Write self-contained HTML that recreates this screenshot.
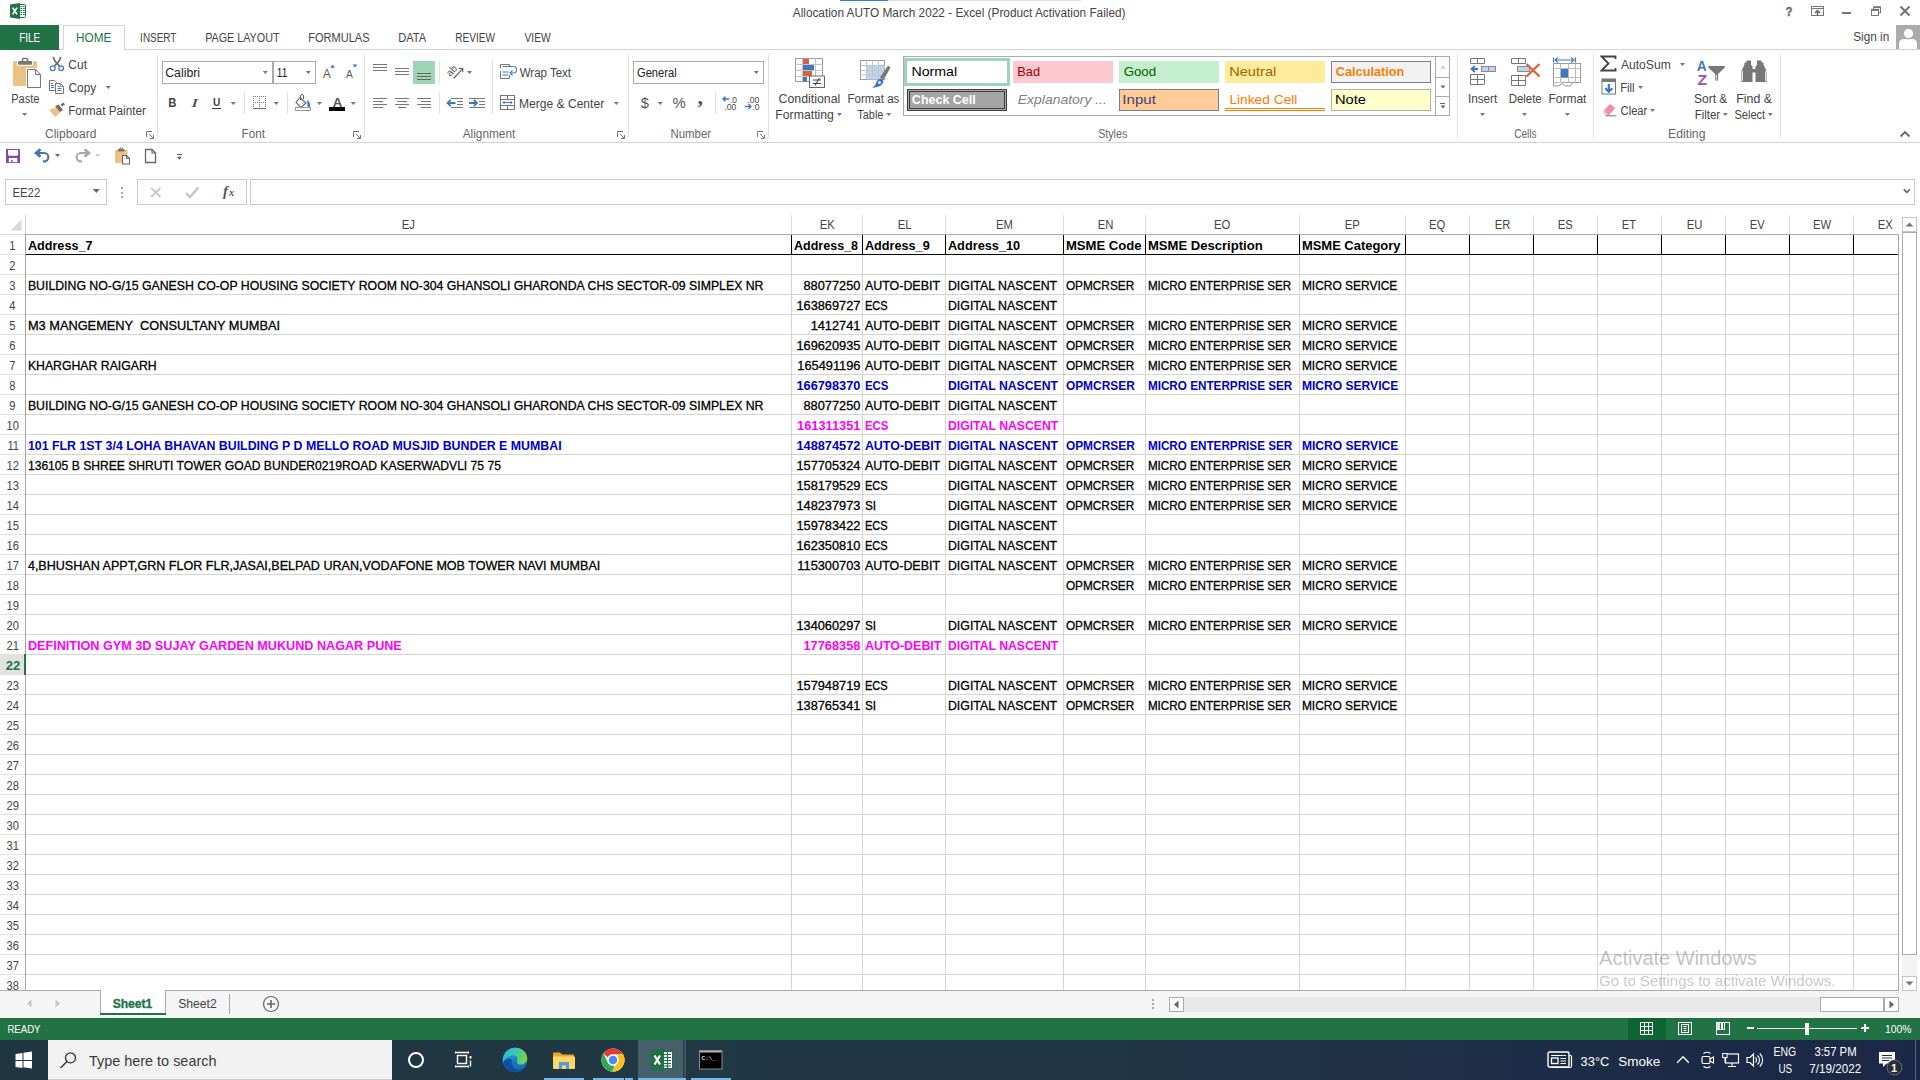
<!DOCTYPE html><html lang="en"><head><meta charset="utf-8"><title>Allocation AUTO March 2022 - Excel</title><style>
html,body{margin:0;padding:0}
body{width:1920px;height:1080px;overflow:hidden;background:#fff;position:relative;font-family:"Liberation Sans",sans-serif}
.a{position:absolute;display:block}
.t{position:absolute;white-space:pre;line-height:1;transform-origin:0 0;display:block}
</style></head><body><div class="a" style="left:840px;top:0px;width:48px;height:1px;background:#2a7de1;"></div>
<div class="a" style="left:888px;top:0px;width:193px;height:1px;background:#dddddd;"></div>
<svg class="a" style="left:9px;top:2px;" width="18" height="18" viewBox="0 0 18 18">
<rect x="9.5" y="2.5" width="7" height="13" rx="1" fill="#fff" stroke="#217346" stroke-width="1"/>
<path d="M11.5 4.5h1.7M14 4.5h1.7M11.5 6.5h1.7M14 6.5h1.7M11.5 8.500h1.7M14 8.500h1.7M11.500 10.500h1.700M14 10.500h1.700M11.500 12.500h1.700M14 12.500h1.700" stroke="#217346" stroke-width="1" fill="none"/>
<path d="M1 2.600L11 1v16L1 15.400z" fill="#217346"/>
<path d="M3.600 5.600l4.400 6.800M8 5.600L3.600 12.400" stroke="#fff" stroke-width="1.700" fill="none"/>
</svg>
<span class="t" style="left:792px;top:7px;font-size:12px;color:#444444;transform:translateX(0.75px) scaleX(0.9847);">Allocation AUTO March 2022 - Excel (Product Activation Failed)</span>
<span class="t" style="left:1785px;top:5px;font-size:13px;color:#6a6a6a;font-weight:bold;transform:translateX(0.57px) scaleX(0.8794);-webkit-text-stroke:0.4px;">?</span>
<svg class="a" style="left:1810px;top:5px;" width="15" height="12" viewBox="0 0 15 12"><rect x="1.5" y="1.5" width="12" height="9" fill="none" stroke="#777" stroke-width="1"/>
<path d="M1.5 3.5h12" stroke="#777"/><path d="M7.5 10v-4.5M5 8l2.5-2.5L10 8" stroke="#666" stroke-width="1.5" fill="none"/></svg>
<div class="a" style="left:1842px;top:12px;width:9px;height:2px;background:#777777;"></div>
<svg class="a" style="left:1870px;top:5px;" width="12" height="12" viewBox="0 0 12 12"><path d="M3.5 4v-2h7v6h-2" fill="none" stroke="#777" stroke-width="1"/><path d="M3 2.3h8" stroke="#777" stroke-width="1.8"/>
<rect x="1.5" y="4.5" width="7" height="6" fill="#fff" stroke="#777"/><path d="M1 5h8" stroke="#777" stroke-width="2"/></svg>
<svg class="a" style="left:1899px;top:5px;" width="12" height="12" viewBox="0 0 12 12"><path d="M1.5 1.5l9 9M10.5 1.5l-9 9" stroke="#777" stroke-width="2.2" fill="none"/></svg>
<div class="a" style="left:0px;top:49px;width:1920px;height:1px;background:#d4d4d4;"></div>
<div class="a" style="left:0px;top:25px;width:59px;height:25px;background:#217346;"></div>
<span class="t" style="left:19px;top:32px;font-size:12px;color:#fff;transform:translateX(0.19px) scaleX(0.8314);">FILE</span>
<div class="a" style="left:63px;top:25px;width:62px;height:25px;background:#fff;border:1px solid #d4d4d4;border-bottom:none;box-sizing:border-box;"></div>
<span class="t" style="left:76px;top:32px;font-size:12px;color:#217346;transform:translateX(0.08px) scaleX(0.9780);">HOME</span>
<span class="t" style="left:140px;top:32px;font-size:12px;color:#444444;transform:translateX(0.11px) scaleX(0.8300);">INSERT</span>
<span class="t" style="left:205px;top:32px;font-size:12px;color:#444444;transform:translateX(0.19px) scaleX(0.8959);">PAGE LAYOUT</span>
<span class="t" style="left:308px;top:32px;font-size:12px;color:#444444;transform:translateX(0.15px) scaleX(0.9202);">FORMULAS</span>
<span class="t" style="left:398px;top:32px;font-size:12px;color:#444444;transform:translateX(0.14px) scaleX(0.9280);">DATA</span>
<span class="t" style="left:455px;top:32px;font-size:12px;color:#444444;transform:translateX(0.16px) scaleX(0.8414);">REVIEW</span>
<span class="t" style="left:524px;top:32px;font-size:12px;color:#444444;transform:translateX(0.51px) scaleX(0.8562);">VIEW</span>
<span class="t" style="left:1853px;top:31px;font-size:12px;color:#444444;transform:translateX(0.15px) scaleX(0.9827);">Sign in</span>
<svg class="a" style="left:1896px;top:25px;" width="24" height="24" viewBox="0 0 24 24"><rect width="24" height="24" fill="#ababab"/>
<path d="M3 24v-5c0-3.2 2-5 5-5h8c3 0 5 1.8 5 5v5z" fill="#fff"/><circle cx="12.5" cy="8.5" r="5.3" fill="#fff" stroke="#ababab" stroke-width="1.4"/></svg>
<div class="a" style="left:0px;top:142px;width:1920px;height:1px;background:#d4d4d4;"></div>
<div class="a" style="left:157px;top:54px;width:1px;height:84px;background:#e1e1e1;"></div>
<div class="a" style="left:364px;top:54px;width:1px;height:84px;background:#e1e1e1;"></div>
<div class="a" style="left:628px;top:54px;width:1px;height:84px;background:#e1e1e1;"></div>
<div class="a" style="left:768px;top:54px;width:1px;height:84px;background:#e1e1e1;"></div>
<div class="a" style="left:1457px;top:54px;width:1px;height:84px;background:#e1e1e1;"></div>
<div class="a" style="left:1593px;top:54px;width:1px;height:84px;background:#e1e1e1;"></div>
<div class="a" style="left:1780px;top:54px;width:1px;height:84px;background:#e1e1e1;"></div>
<span class="t" style="left:45px;top:128px;font-size:12px;color:#666666;">Clipboard</span>
<span class="t" style="left:241px;top:128px;font-size:12px;color:#666666;transform:translateX(0.61px) scaleX(0.9749);">Font</span>
<span class="t" style="left:462px;top:128px;font-size:12px;color:#666666;transform:translateX(0.73px) scaleX(0.9838);">Alignment</span>
<span class="t" style="left:670px;top:128px;font-size:12px;color:#666666;transform:translateX(0.45px) scaleX(0.9525);">Number</span>
<span class="t" style="left:1098px;top:128px;font-size:12px;color:#666666;transform:translateX(0.18px) scaleX(0.8903);">Styles</span>
<span class="t" style="left:1514px;top:128px;font-size:12px;color:#666666;transform:translateX(0.21px) scaleX(0.8413);">Cells</span>
<span class="t" style="left:1668px;top:128px;font-size:12px;color:#666666;transform:translateX(0.11px) scaleX(1.0175);">Editing</span>
<svg class="a" style="left:146px;top:131px;" width="8" height="8" viewBox="0 0 8 8"><path d="M0.5 6V0.5H6" fill="none" stroke="#777"/><path d="M3 3l4 4M7.500 4v3.500H4" fill="none" stroke="#777"/></svg>
<svg class="a" style="left:353px;top:131px;" width="8" height="8" viewBox="0 0 8 8"><path d="M0.5 6V0.5H6" fill="none" stroke="#777"/><path d="M3 3l4 4M7.500 4v3.500H4" fill="none" stroke="#777"/></svg>
<svg class="a" style="left:617px;top:131px;" width="8" height="8" viewBox="0 0 8 8"><path d="M0.5 6V0.5H6" fill="none" stroke="#777"/><path d="M3 3l4 4M7.500 4v3.500H4" fill="none" stroke="#777"/></svg>
<svg class="a" style="left:757px;top:131px;" width="8" height="8" viewBox="0 0 8 8"><path d="M0.5 6V0.5H6" fill="none" stroke="#777"/><path d="M3 3l4 4M7.500 4v3.500H4" fill="none" stroke="#777"/></svg>
<svg class="a" style="left:1899px;top:130px;" width="12" height="8" viewBox="0 0 12 8"><path d="M1.5 6.500l4.500-4.500 4.500 4.500" fill="none" stroke="#666" stroke-width="1.800"/></svg>
<svg class="a" style="left:12px;top:57px;" width="30" height="32" viewBox="0 0 30 32"><rect x="1" y="4" width="24" height="25" rx="1.500" fill="#eac282"/>
<rect x="5" y="3" width="16" height="5.800" fill="#fff"/>
<rect x="6" y="4" width="14" height="3.700" rx="0.800" fill="#777"/><path d="M10.500 4.500v-2a1 1 0 0 1 1-1h3a1 1 0 0 1 1 1v2" fill="none" stroke="#777" stroke-width="1.600"/>
<path d="M14 11h11l5 5v15H14z" fill="#fff"/>
<path d="M15.500 12.500h8l5 5v13h-13z" fill="#fff" stroke="#777" stroke-width="1"/><path d="M23.500 12.500v5h5" fill="none" stroke="#777"/></svg>
<span class="t" style="left:11px;top:93px;font-size:12px;color:#444444;transform:translateX(0.16px) scaleX(0.9200);">Paste</span>
<svg class="a" style="left:21px;top:112px;" width="7" height="5" viewBox="0 0 7 5"><path d="M1.0 1.0h5l-2.5 3z" fill="#777"/></svg>
<svg class="a" style="left:49px;top:56px;" width="16" height="16" viewBox="0 0 16 16"><path d="M4.300 0.800c.5 3 2 5.500 6.200 9M11.700 0.800c-.5 3-2 5.500-6.200 9" stroke="#666" stroke-width="1.700" fill="none"/>
<circle cx="3.800" cy="12.300" r="2.400" fill="none" stroke="#3a78c3" stroke-width="1.200"/><circle cx="12.200" cy="12.300" r="2.400" fill="none" stroke="#3a78c3" stroke-width="1.200"/></svg>
<span class="t" style="left:68px;top:59px;font-size:12px;color:#444444;transform:translateX(0.36px) scaleX(0.9959);">Cut</span>
<svg class="a" style="left:48px;top:79px;" width="17" height="16" viewBox="0 0 17 16"><path d="M1.500 1.500h5l2 2v8h-7z" fill="#fff" stroke="#777"/><path d="M3 4.500h2M3 6.500h3M3 8.500h3" stroke="#3a78c3"/>
<path d="M7.500 4.500h5l3 3v7h-8z" fill="#fff" stroke="#777"/><path d="M12.500 4.500v3h3" fill="none" stroke="#777" stroke-width="0.800"/><path d="M9.500 7.500h2M9.500 9.500h4M9.500 11.500h4" stroke="#3a78c3"/></svg>
<span class="t" style="left:68px;top:82px;font-size:12px;color:#444444;transform:translateX(0.46px) scaleX(0.9930);">Copy</span>
<svg class="a" style="left:105px;top:85px;" width="7" height="5" viewBox="0 0 7 5"><path d="M0.7999999999999972 1.0h5l-2.5 3z" fill="#777"/></svg>
<svg class="a" style="left:48px;top:102px;" width="18" height="16" viewBox="0 0 18 16"><path d="M1 7.500l8.500-2.500 3 5.500-5.500 4.500z" fill="#eac282"/><path d="M7 4l3.500-1.500 4.500 5.500-3 2z" fill="#6e6e6e"/><path d="M12.500 2.500l3-2 1.500 2-3 2z" fill="#6e6e6e"/></svg>
<span class="t" style="left:68px;top:105px;font-size:12px;color:#444444;transform:translateX(0.19px) scaleX(0.9792);">Format Painter</span>
<div class="a" style="left:162px;top:61px;width:111px;height:23px;background:#fff;border:1px solid #ababab;box-sizing:border-box;"></div>
<div class="a" style="left:273px;top:61px;width:43px;height:23px;background:#fff;border:1px solid #ababab;box-sizing:border-box;"></div>
<span class="t" style="left:165px;top:67px;font-size:12.5px;color:#222;transform:translateX(0.24px) scaleX(0.9822);">Calibri</span>
<span class="t" style="left:276px;top:67px;font-size:12.5px;color:#222;transform:translateX(0.79px) scaleX(0.8032);">11</span>
<svg class="a" style="left:262px;top:70px;" width="7" height="5" viewBox="0 0 7 5"><path d="M0.8000000000000114 1.0h5l-2.5 3z" fill="#777"/></svg>
<svg class="a" style="left:305px;top:70px;" width="7" height="5" viewBox="0 0 7 5"><path d="M0.8000000000000114 1.0h5l-2.5 3z" fill="#777"/></svg>
<span class="t" style="left:323px;top:67px;font-size:13px;color:#555;transform:translateX(0.03px) scaleX(0.8911);">A</span>
<svg class="a" style="left:330px;top:64px;" width="6" height="4" viewBox="0 0 6 4"><path d="M0 3.800l2.500-3 2.500 3z" fill="#3a78c3"/></svg>
<span class="t" style="left:346px;top:69px;font-size:10.5px;color:#555;transform:translateX(0.07px) scaleX(0.9723);">A</span>
<svg class="a" style="left:352px;top:64px;" width="6" height="4" viewBox="0 0 6 4"><path d="M0.500 0.500h5l-2.500 3z" fill="#3a78c3"/></svg>
<span class="t" style="left:168px;top:97px;font-size:12.5px;color:#444;font-weight:bold;transform:translateX(0.28px) scaleX(0.9023);">B</span>
<span class="t" style="left:191px;top:96px;font-size:13px;color:#444;font-style:italic;font-family:'Liberation Serif', serif;transform:translateX(0.09px) scaleX(1.6523);">I</span>
<span class="t" style="left:213px;top:97px;font-size:10.5px;color:#444;font-weight:bold;transform:translateX(0.06px) scaleX(0.9642);">U</span>
<div class="a" style="left:212px;top:108px;width:9px;height:1px;background:#444;"></div>
<svg class="a" style="left:230px;top:101px;" width="7" height="5" viewBox="0 0 7 5"><path d="M0.8000000000000114 1.0h5l-2.5 3z" fill="#777"/></svg>
<div class="a" style="left:244px;top:92px;width:1px;height:22px;background:#e1e1e1;"></div>
<svg class="a" style="left:253px;top:96px;" width="14" height="14" viewBox="0 0 14 14"><path d="M0 0.500h13M0 6.500h13M0.500 0v12M6.500 0v12M12.500 0v12" stroke="#777" stroke-dasharray="1 1" fill="none" shape-rendering="crispEdges"/><path d="M0 12.500h13" stroke="#666" stroke-width="1" shape-rendering="crispEdges"/></svg>
<svg class="a" style="left:273px;top:101px;" width="7" height="5" viewBox="0 0 7 5"><path d="M0.8000000000000114 1.0h5l-2.5 3z" fill="#777"/></svg>
<div class="a" style="left:287px;top:92px;width:1px;height:22px;background:#e1e1e1;"></div>
<svg class="a" style="left:294px;top:94px;" width="18" height="18" viewBox="0 0 18 18"><path d="M6 3.500l6 5.500-5 4.500-5-5z" fill="#fff" stroke="#666" stroke-width="1.100"/><path d="M6.500 6V2a1.500 1.500 0 0 1 3 0v3" fill="none" stroke="#666"/>
<path d="M13.200 6c2 1.500 3.800 4 2.800 6.500-1 1.200-3 .5-2.600-1.500z" fill="#3a78c3"/><rect x="1.500" y="13.500" width="15" height="3" fill="#fff" stroke="#999"/></svg>
<svg class="a" style="left:316px;top:101px;" width="7" height="5" viewBox="0 0 7 5"><path d="M1.0 1.0h5l-2.5 3z" fill="#777"/></svg>
<span class="t" style="left:332px;top:97px;font-size:12.5px;color:#555;font-weight:bold;transform:translateX(0.70px) scaleX(1.0600);">A</span>
<div class="a" style="left:329px;top:107px;width:16px;height:4px;background:#000;"></div>
<svg class="a" style="left:350px;top:101px;" width="7" height="5" viewBox="0 0 7 5"><path d="M0.8000000000000114 1.0h5l-2.5 3z" fill="#777"/></svg>
<div class="a" style="left:373px;top:64px;width:14px;height:1px;background:#777;"></div>
<div class="a" style="left:373px;top:67px;width:14px;height:1px;background:#777;"></div>
<div class="a" style="left:373px;top:70px;width:14px;height:1px;background:#777;"></div>
<div class="a" style="left:395px;top:68px;width:14px;height:1px;background:#777;"></div>
<div class="a" style="left:395px;top:71px;width:14px;height:1px;background:#777;"></div>
<div class="a" style="left:395px;top:74px;width:14px;height:1px;background:#777;"></div>
<div class="a" style="left:413px;top:61px;width:22px;height:23px;background:#9fd5b7;"></div>
<div class="a" style="left:417px;top:73px;width:14px;height:1px;background:#666;"></div>
<div class="a" style="left:417px;top:76px;width:14px;height:1px;background:#666;"></div>
<div class="a" style="left:417px;top:79px;width:14px;height:1px;background:#666;"></div>
<div class="a" style="left:439px;top:61px;width:1px;height:22px;background:#e1e1e1;"></div>
<svg class="a" style="left:445px;top:62px;" width="20" height="19" viewBox="0 0 20 19"><path d="M8.500 16.500L17.500 6.800" stroke="#666" stroke-width="1.200"/><path d="M14 6.300l3.800 0.200-0.200 3.800" fill="none" stroke="#666" stroke-width="1.200"/>
<g transform="rotate(-47 7.500 9)"><text x="1.500" y="11.500" font-family="Liberation Sans,sans-serif" font-size="10" fill="#555">ab</text></g></svg>
<svg class="a" style="left:466px;top:70px;" width="7" height="5" viewBox="0 0 7 5"><path d="M1.0 1.0h5l-2.5 3z" fill="#777"/></svg>
<div class="a" style="left:492px;top:60px;width:1px;height:54px;background:#e1e1e1;"></div>
<div class="a" style="left:439px;top:92px;width:1px;height:22px;background:#e1e1e1;"></div>
<svg class="a" style="left:500px;top:63px;" width="17" height="17" viewBox="0 0 17 17"><path d="M0.500 5.500v-4h9v2" fill="none" stroke="#777"/><path d="M0.500 8v7.500h9V12" fill="none" stroke="#777"/>
<path d="M2.500 3.500h11" stroke="#3a78c3"/><path d="M2.500 9h6M2.500 12h6" stroke="#3a78c3" stroke-width="1.100"/>
<path d="M13.500 3.500a3 3 0 0 1 0 6.500H10.500" fill="none" stroke="#3a78c3" stroke-width="1.100"/><path d="M12.500 7.500l-2.500 2.500 2.500 2.500" fill="none" stroke="#3a78c3" stroke-width="1.100"/></svg>
<span class="t" style="left:519px;top:67px;font-size:12px;color:#444444;transform:translateX(0.65px) scaleX(0.9597);">Wrap Text</span>
<div class="a" style="left:373px;top:98px;width:14px;height:1px;background:#777;"></div>
<div class="a" style="left:373px;top:101px;width:10px;height:1px;background:#777;"></div>
<div class="a" style="left:373px;top:104px;width:14px;height:1px;background:#777;"></div>
<div class="a" style="left:373px;top:107px;width:10px;height:1px;background:#777;"></div>
<div class="a" style="left:395.0px;top:98px;width:14px;height:1px;background:#777;"></div>
<div class="a" style="left:397.0px;top:101px;width:10px;height:1px;background:#777;"></div>
<div class="a" style="left:395.0px;top:104px;width:14px;height:1px;background:#777;"></div>
<div class="a" style="left:398.0px;top:107px;width:8px;height:1px;background:#777;"></div>
<div class="a" style="left:417px;top:98px;width:14px;height:1px;background:#777;"></div>
<div class="a" style="left:421px;top:101px;width:10px;height:1px;background:#777;"></div>
<div class="a" style="left:417px;top:104px;width:14px;height:1px;background:#777;"></div>
<div class="a" style="left:421px;top:107px;width:10px;height:1px;background:#777;"></div>
<svg class="a" style="left:446px;top:97px;" width="18" height="12" viewBox="0 0 18 12"><path d="M5 1.500h12M11 4.500h6M11 7.500h6M5 10.500h12" stroke="#777"/><path d="M1.500 6h8M4.800 2.800L1.500 6l3.300 3.200" fill="none" stroke="#3a78c3" stroke-width="1.800"/></svg>
<svg class="a" style="left:468px;top:97px;" width="18" height="12" viewBox="0 0 18 12"><path d="M1 1.500h16M11 4.500h6M11 7.500h6M1 10.500h16" stroke="#777"/><path d="M1 6h8M5.800 2.800L9 6l-3.200 3.200" fill="none" stroke="#3a78c3" stroke-width="1.800"/></svg>
<svg class="a" style="left:499px;top:94px;" width="17" height="17" viewBox="0 0 17 17"><rect x="1.500" y="1.500" width="14" height="14" fill="#fff" stroke="#777"/><path d="M1.500 5.500h14M1.500 11.500h14M8.500 1.500v4M8.500 11.500v4" stroke="#777"/>
<path d="M4 8.500h9M5.500 7L4 8.500 5.500 10M11.500 7L13 8.500 11.500 10" fill="none" stroke="#3a78c3"/></svg>
<span class="t" style="left:518px;top:98px;font-size:12px;color:#444444;transform:translateX(0.99px) scaleX(1.0055);">Merge &amp; Center</span>
<svg class="a" style="left:613px;top:101px;" width="7" height="5" viewBox="0 0 7 5"><path d="M0.7999999999999545 1.0h5l-2.5 3z" fill="#777"/></svg>
<div class="a" style="left:633px;top:61px;width:131px;height:23px;background:#fff;border:1px solid #ababab;box-sizing:border-box;"></div>
<span class="t" style="left:636px;top:67px;font-size:12.5px;color:#222;transform:translateX(0.97px) scaleX(0.8925);">General</span>
<svg class="a" style="left:753px;top:70px;" width="7" height="5" viewBox="0 0 7 5"><path d="M0.7999999999999545 1.0h5l-2.5 3z" fill="#777"/></svg>
<span class="t" style="left:640px;top:95px;font-size:15px;color:#555;transform:translateX(0.81px) scaleX(0.9845);">$</span>
<svg class="a" style="left:657px;top:101px;" width="7" height="5" viewBox="0 0 7 5"><path d="M0.7999999999999545 1.0h5l-2.5 3z" fill="#777"/></svg>
<span class="t" style="left:672px;top:96px;font-size:14.5px;color:#555;transform:translateX(0.38px) scaleX(1.0287);">%</span>
<span class="t" style="left:697px;top:87px;font-size:21px;color:#555;font-weight:bold;font-family:'Liberation Serif', serif;transform:translateX(0.40px) scaleX(1.0422);">,</span>
<div class="a" style="left:715px;top:92px;width:1px;height:22px;background:#e1e1e1;"></div>
<svg class="a" style="left:722px;top:95px;" width="17" height="16" viewBox="0 0 17 16"><path d="M1 4h6M3.500 1.500L1 4l2.500 2.500" fill="none" stroke="#3a78c3" stroke-width="1.300"/>
<text x="8" y="7.500" font-family="Liberation Sans,sans-serif" font-size="8.500" fill="#444">.0</text><text x="2.500" y="14.500" font-family="Liberation Sans,sans-serif" font-size="8.500" fill="#444">.00</text></svg>
<svg class="a" style="left:744px;top:95px;" width="17" height="16" viewBox="0 0 17 16"><text x="3.500" y="7.500" font-family="Liberation Sans,sans-serif" font-size="8.500" fill="#444">.00</text>
<path d="M1 11.500h6M4.500 9L7 11.500 4.500 14" fill="none" stroke="#3a78c3" stroke-width="1.300"/><text x="8.500" y="14.500" font-family="Liberation Sans,sans-serif" font-size="8.500" fill="#444">.0</text></svg>
<svg class="a" style="left:795px;top:57px;" width="31" height="32" viewBox="0 0 31 32"><rect x="0.500" y="1.500" width="27" height="23" fill="#fff" stroke="#9a9a9a"/>
<path d="M0.500 7.500h27M0.500 13.500h27M0.500 19.500h27M7.500 1.500v23M20.500 1.500v23" stroke="#c4c4c4"/>
<rect x="8" y="2" width="6" height="5" fill="#d9623b"/><rect x="8" y="8" width="11" height="5" fill="#3a78c3"/><rect x="8" y="14" width="9" height="5" fill="#d9623b"/><rect x="8" y="20" width="4" height="4.500" fill="#3a78c3"/>
<rect x="14.500" y="19" width="15" height="11.500" fill="#fff" stroke="#666"/>
<path d="M18 23h8M18 26.500h8M24.500 21l-4.500 7.500" stroke="#444" stroke-width="1.100"/></svg>
<span class="t" style="left:778px;top:93px;font-size:12px;color:#444444;transform:translateX(0.44px) scaleX(1.0315);">Conditional</span>
<span class="t" style="left:775px;top:109px;font-size:12px;color:#444444;transform:translateX(0.31px) scaleX(1.0220);">Formatting</span>
<svg class="a" style="left:836px;top:112px;" width="7" height="5" viewBox="0 0 7 5"><path d="M1.0 1.0h5l-2.5 3z" fill="#777"/></svg>
<svg class="a" style="left:860px;top:59px;" width="31" height="30" viewBox="0 0 31 30"><rect x="0.500" y="1.500" width="24" height="19" fill="#fff" stroke="#9a9a9a"/>
<rect x="6.500" y="6.500" width="18" height="14" fill="#bdd3ee"/>
<path d="M0.500 6.500h24M0.500 11.500h24M0.500 16h24M6.500 1.500v19M12.500 1.500v19M18.500 1.500v19" stroke="#c4c4c4"/>
<path d="M20 18.500L28 6.500l2.500 2-7 12.500z" fill="#777"/><path d="M12 28.500c3-1.500 4-4 5-6.500 1.500-2.500 4-3 5.500-1.500 1.500 1.500 1 4-1 5.500-2.500 2-6 2.500-9.500 2.500z" fill="#3a78c3"/><circle cx="19.500" cy="23.500" r="1.500" fill="#dce8f6"/></svg>
<span class="t" style="left:847px;top:93px;font-size:12px;color:#444444;transform:translateX(0.44px) scaleX(0.9607);">Format as</span>
<span class="t" style="left:857px;top:109px;font-size:12px;color:#444444;transform:translateX(0.35px) scaleX(0.9080);">Table</span>
<svg class="a" style="left:885px;top:112px;" width="7" height="5" viewBox="0 0 7 5"><path d="M1.2000000000000455 1.0h5l-2.5 3z" fill="#777"/></svg>
<div class="a" style="left:903px;top:56px;width:547px;height:60px;background:#fff;border:1px solid #ababab;box-sizing:border-box;"></div>
<div class="a" style="left:904px;top:58px;width:106px;height:28px;background:#fff;border:3px solid #9fd5b7;box-sizing:border-box;"></div>
<span class="t" style="left:911px;top:65px;font-size:13.2px;color:#000;transform:translateX(0.40px) scaleX(1.0760);">Normal</span>
<div class="a" style="left:1013px;top:61px;width:100px;height:22px;background:#ffc7ce;"></div>
<span class="t" style="left:1017px;top:65px;font-size:13.2px;color:#9c0006;transform:translateX(0.36px) scaleX(0.9672);">Bad</span>
<div class="a" style="left:1119px;top:61px;width:100px;height:22px;background:#c6efce;"></div>
<span class="t" style="left:1123px;top:65px;font-size:13.2px;color:#006100;transform:translateX(0.63px) scaleX(1.0071);">Good</span>
<div class="a" style="left:1225px;top:61px;width:100px;height:22px;background:#ffeb9c;"></div>
<span class="t" style="left:1229px;top:65px;font-size:13.2px;color:#9c6500;transform:translateX(0.20px) scaleX(1.1064);">Neutral</span>
<div class="a" style="left:1331px;top:61px;width:100px;height:22px;background:#f2f2f2;border:1px solid #7f7f7f;box-sizing:border-box;"></div>
<span class="t" style="left:1335px;top:65px;font-size:13.2px;color:#fa7d00;font-weight:bold;transform:translateX(0.76px) scaleX(0.9651);">Calculation</span>
<div class="a" style="left:907px;top:89px;width:100px;height:22px;background:#a5a5a5;border:3px double #3f3f3f;box-sizing:border-box;"></div>
<span class="t" style="left:911px;top:93px;font-size:13.2px;color:#fff;font-weight:bold;transform:translateX(0.87px) scaleX(0.9460);">Check Cell</span>
<span class="t" style="left:1017px;top:93px;font-size:13.2px;color:#7f7f7f;font-style:italic;transform:translateX(0.82px) scaleX(1.0557);">Explanatory ...</span>
<div class="a" style="left:1119px;top:89px;width:100px;height:22px;background:#ffcc99;border:1px solid #7f7f7f;box-sizing:border-box;"></div>
<span class="t" style="left:1122px;top:93px;font-size:13.2px;color:#3f3f76;transform:translateX(0.37px) scaleX(1.1428);">Input</span>
<span class="t" style="left:1229px;top:93px;font-size:13.2px;color:#fa7d00;transform:translateX(0.38px) scaleX(1.0426);">Linked Cell</span>
<div class="a" style="left:1225px;top:108px;width:100px;height:3px;border-top:1px solid #ff8001;border-bottom:1px solid #ff8001;box-sizing:border-box;"></div>
<div class="a" style="left:1331px;top:89px;width:100px;height:22px;background:#ffffcc;border:1px solid #b2b2b2;box-sizing:border-box;"></div>
<span class="t" style="left:1334px;top:93px;font-size:13.2px;color:#000;transform:translateX(1.00px) scaleX(1.1145);">Note</span>
<div class="a" style="left:1435px;top:57px;width:1px;height:58px;background:#ababab;"></div>
<div class="a" style="left:1436px;top:77px;width:13px;height:1px;background:#ababab;"></div>
<div class="a" style="left:1436px;top:96px;width:13px;height:1px;background:#ababab;"></div>
<div class="a" style="left:1436px;top:57px;width:13px;height:20px;background:#fafafa;"></div>
<svg class="a" style="left:1440px;top:65px;" width="6" height="4" viewBox="0 0 6 4"><path d="M0.500 3.500l2.500-3 2.500 3z" fill="#c8c8c8"/></svg>
<svg class="a" style="left:1440px;top:85px;" width="6" height="4" viewBox="0 0 6 4"><path d="M0.500 0.500h5l-2.500 3z" fill="#666"/></svg>
<div class="a" style="left:1440px;top:103px;width:5px;height:1px;background:#666;"></div>
<svg class="a" style="left:1440px;top:105px;" width="6" height="4" viewBox="0 0 6 4"><path d="M0.500 0.500h5l-2.500 3z" fill="#666"/></svg>
<svg class="a" style="left:1469px;top:57px;" width="28" height="30" viewBox="0 0 28 30"><path d="M1.500 1.500h14v5h-14zM8.500 1.500v5" fill="#fff" stroke="#777"/>
<rect x="12.500" y="9.500" width="14" height="5" fill="#bdd3ee" stroke="#8a8a8a"/><path d="M19.500 9.500v5" stroke="#8a8a8a"/>
<path d="M2.500 12h6.500M5.800 8.800L2.500 12l3.300 3.200" fill="none" stroke="#3a78c3" stroke-width="1.800"/>
<path d="M1.500 17.500h14v10h-14zM1.500 22.500h14M8.500 17.500v10" fill="#fff" stroke="#777"/></svg>
<span class="t" style="left:1467px;top:93px;font-size:12px;color:#444444;transform:translateX(0.90px) scaleX(0.9755);">Insert</span>
<svg class="a" style="left:1479px;top:112px;" width="7" height="5" viewBox="0 0 7 5"><path d="M1.0 1.0h5l-2.5 3z" fill="#777"/></svg>
<svg class="a" style="left:1510px;top:57px;" width="32" height="30" viewBox="0 0 32 30"><path d="M1.500 1.500h14v5h-14zM8.500 1.500v5" fill="#fff" stroke="#777"/>
<rect x="7.500" y="9.500" width="12" height="5" fill="#bdd3ee" stroke="#8a8a8a"/>
<path d="M1.500 18.500h14v10h-14zM1.500 23.500h14M8.500 18.500v10" fill="#fff" stroke="#777"/>
<path d="M16.500 7l13 12.500M29.500 7L16.500 19.500" stroke="#d9623b" stroke-width="2.300" fill="none"/></svg>
<span class="t" style="left:1508px;top:93px;font-size:12px;color:#444444;transform:translateX(0.63px) scaleX(0.9530);">Delete</span>
<svg class="a" style="left:1521px;top:112px;" width="7" height="5" viewBox="0 0 7 5"><path d="M1.0 1.0h5l-2.5 3z" fill="#777"/></svg>
<svg class="a" style="left:1552px;top:55px;" width="30" height="34" viewBox="0 0 30 34"><path d="M1.500 2.500v5M23.500 2.500v5M3 5h19M6 2.500L3 5l3 2.500M19 2.500L22 5l-3 2.500" fill="none" stroke="#3a78c3" stroke-width="1.100"/>
<rect x="1.500" y="8.500" width="27" height="19" fill="#fff" stroke="#999"/><path d="M1.500 13.500h27M1.500 22.500h27M8.500 8.500v19M16.500 8.500v19M23.500 8.500v19" stroke="#bbb"/>
<rect x="9" y="14" width="7" height="8.500" fill="#3a78c3"/>
<path d="M1.500 27.500v3.500h5.500l2-2h2.500l1.500 2h5.500l2-3" fill="#fff" stroke="#999"/></svg>
<span class="t" style="left:1548px;top:93px;font-size:12px;color:#444444;transform:translateX(0.58px) scaleX(0.9947);">Format</span>
<svg class="a" style="left:1564px;top:112px;" width="7" height="5" viewBox="0 0 7 5"><path d="M1.0 1.0h5l-2.5 3z" fill="#777"/></svg>
<svg class="a" style="left:1600px;top:55px;" width="18" height="17" viewBox="0 0 18 17"><path d="M15.500 4V1.500H1.500l7 7-7 7h14V13" fill="none" stroke="#444" stroke-width="1.800"/></svg>
<span class="t" style="left:1620px;top:59px;font-size:12px;color:#444444;transform:translateX(0.95px) scaleX(1.0084);">AutoSum</span>
<svg class="a" style="left:1679px;top:62px;" width="7" height="5" viewBox="0 0 7 5"><path d="M1.0 1.0h5l-2.5 3z" fill="#777"/></svg>
<svg class="a" style="left:1601px;top:78px;" width="16" height="18" viewBox="0 0 16 18"><rect x="1" y="1" width="13.500" height="15" fill="#fff" stroke="#777"/><rect x="1" y="1" width="13.500" height="3" fill="#777"/>
<path d="M7.800 6v7.500M4.200 10.200l3.600 3.600 3.600-3.600" fill="none" stroke="#3a78c3" stroke-width="2.200"/></svg>
<span class="t" style="left:1620px;top:82px;font-size:12px;color:#444444;transform:translateX(0.27px) scaleX(0.9336);">Fill</span>
<svg class="a" style="left:1637px;top:85px;" width="7" height="5" viewBox="0 0 7 5"><path d="M1.0 1.0h5l-2.5 3z" fill="#777"/></svg>
<svg class="a" style="left:1601px;top:102px;" width="17" height="15" viewBox="0 0 17 15"><path d="M2 9.500l7-7.500 5.500 4-7 7.500H4.500z" fill="#ee8fa3"/><path d="M2 9.500L4.500 13.500h3l-3.500-5z" fill="#f6c3cd"/><path d="M5 13.800h10.500" stroke="#777"/></svg>
<span class="t" style="left:1620px;top:105px;font-size:12px;color:#444444;transform:translateX(0.58px) scaleX(0.9308);">Clear</span>
<svg class="a" style="left:1649px;top:108px;" width="7" height="5" viewBox="0 0 7 5"><path d="M1.0 1.0h5l-2.5 3z" fill="#777"/></svg>
<span class="t" style="left:1696px;top:58px;font-size:15.5px;color:#3a78c3;font-weight:bold;transform:translateX(0.68px) scaleX(0.8903);">A</span>
<span class="t" style="left:1697px;top:72px;font-size:15.5px;color:#9a4fb5;font-weight:bold;transform:translateX(0.42px) scaleX(1.0213);">Z</span>
<svg class="a" style="left:1707px;top:65px;" width="19" height="17" viewBox="0 0 19 17"><path d="M1.200 1h16.600v1.500l-6.800 6.500v6.500h-2.800V9L1.200 2.500z" fill="#777"/><path d="M9.300 10v4.800" stroke="#fff" stroke-width="0.800"/></svg>
<span class="t" style="left:1694px;top:93px;font-size:12px;color:#444444;">Sort &amp;</span>
<span class="t" style="left:1694px;top:109px;font-size:12px;color:#444444;transform:translateX(0.65px) scaleX(0.9546);">Filter</span>
<svg class="a" style="left:1722px;top:112px;" width="7" height="5" viewBox="0 0 7 5"><path d="M0.7999999999999545 1.0h5l-2.5 3z" fill="#777"/></svg>
<svg class="a" style="left:1740px;top:59px;" width="28" height="25" viewBox="0 0 28 25"><path d="M6.500 1.500h4.500v4l1.500 2.500V23H1.500V12l3-6.500V3.500h2zM21.500 1.500H17v4l-1.500 2.500V23h11V12l-3-6.500V3.500h-2z" fill="#777"/>
<rect x="11.500" y="10" width="5" height="3.500" fill="#777"/><path d="M2.500 12v10M25.500 12v10" stroke="#fff" stroke-width="0.800"/></svg>
<span class="t" style="left:1736px;top:93px;font-size:12px;color:#444444;transform:translateX(0.28px) scaleX(1.0326);">Find &amp;</span>
<span class="t" style="left:1734px;top:109px;font-size:12px;color:#444444;transform:translateX(0.40px) scaleX(0.9221);">Select</span>
<svg class="a" style="left:1767px;top:112px;" width="7" height="5" viewBox="0 0 7 5"><path d="M0.7999999999999545 1.0h5l-2.5 3z" fill="#777"/></svg>
<svg class="a" style="left:6px;top:149px;" width="15" height="15" viewBox="0 0 15 15"><rect x="0" y="0" width="14" height="14" rx="0.500" fill="#8347a6"/>
<path d="M2 1h10.200v4.300a1.500 1.500 0 0 1-1.500 1.500H3.500A1.500 1.500 0 0 1 2 5.300z" fill="#fff"/>
<rect x="2.800" y="9" width="8.500" height="4.200" fill="#fff"/><rect x="5.200" y="11.200" width="1.600" height="2" fill="#8347a6"/></svg>
<svg class="a" style="left:34px;top:148px;" width="17" height="16" viewBox="0 0 17 16"><path d="M3 5h7.200a4.200 4.200 0 0 1 0 8.400H9" fill="none" stroke="#3b78b3" stroke-width="2.100"/>
<path d="M6.500 1.300L2 5l4.500 3.700" fill="none" stroke="#3b78b3" stroke-width="2.600"/></svg>
<svg class="a" style="left:54px;top:153px;" width="7" height="5" viewBox="0 0 7 5"><path d="M1.0 1.0h5l-2.5 3z" fill="#666"/></svg>
<svg class="a" style="left:74px;top:148px;" width="17" height="16" viewBox="0 0 17 16"><path d="M14 5H6.800a4.200 4.200 0 0 0 0 8.400H8" fill="none" stroke="#a9a9a9" stroke-width="2.100"/>
<path d="M10.500 1.300L15 5l-4.500 3.700" fill="none" stroke="#a9a9a9" stroke-width="2.600"/></svg>
<svg class="a" style="left:94px;top:153px;" width="7" height="5" viewBox="0 0 7 5"><path d="M1.0 1.0h5l-2.5 3z" fill="#c8c8c8"/></svg>
<svg class="a" style="left:114px;top:147px;" width="17" height="18" viewBox="0 0 17 18"><rect x="1" y="3" width="12.500" height="13" rx="0.800" fill="#eac282"/>
<rect x="4" y="2" width="6.500" height="2.500" fill="#777"/><path d="M6 2.500v-1.500h2.500v1.500" fill="none" stroke="#777" stroke-width="1"/>
<path d="M8.500 8.500h4l3 3v5.500h-7z" fill="#fff" stroke="#666" stroke-width="1.100"/><path d="M12.500 8.500v3h3" fill="none" stroke="#666" stroke-width="1"/></svg>
<svg class="a" style="left:144px;top:148px;" width="13" height="16" viewBox="0 0 13 16"><path d="M1.500 1.500h6.500l3.500 3.500v9.500h-10z" fill="#fff" stroke="#666" stroke-width="1.300"/><path d="M8 1.500v3.500h3.500" fill="none" stroke="#666" stroke-width="1.100"/></svg>
<div class="a" style="left:177px;top:154px;width:5px;height:1px;background:#666;"></div>
<svg class="a" style="left:176px;top:156px;" width="7" height="5" viewBox="0 0 7 5"><path d="M1.0 0.8000000000000114h5l-2.5 3z" fill="#666"/></svg>
<div class="a" style="left:5px;top:179px;width:102px;height:26px;background:#fff;border:1px solid #c6c6c6;box-sizing:border-box;"></div>
<span class="t" style="left:12px;top:187px;font-size:12.5px;color:#444444;transform:translateX(0.43px) scaleX(0.9100);">EE22</span>
<svg class="a" style="left:92px;top:188px;" width="9" height="6" viewBox="0 0 9 6"><path d="M0.7999999999999972 1.0h7l-3.5 4z" fill="#666"/></svg>
<div class="a" style="left:121px;top:187px;width:2px;height:2px;background:#a6a6a6;"></div>
<div class="a" style="left:121px;top:192px;width:2px;height:2px;background:#a6a6a6;"></div>
<div class="a" style="left:121px;top:196px;width:2px;height:2px;background:#a6a6a6;"></div>
<div class="a" style="left:137px;top:179px;width:110px;height:26px;background:#fff;border:1px solid #c6c6c6;box-sizing:border-box;"></div>
<svg class="a" style="left:149px;top:186px;" width="14" height="14" viewBox="0 0 14 14"><path d="M2 1.800l9.500 9.200M11.500 1.800L2 11" stroke="#c6c6c6" stroke-width="1.800" fill="none"/></svg>
<svg class="a" style="left:184px;top:186px;" width="16" height="14" viewBox="0 0 16 14"><path d="M2 7l4 4L14.500 1.500" stroke="#c4c4c4" stroke-width="2.400" fill="none"/></svg>
<span class="t" style="left:223px;top:184px;font-size:15px;color:#555;font-weight:bold;font-style:italic;font-family:'Liberation Serif', serif;">f</span>
<span class="t" style="left:229px;top:188px;font-size:10.5px;color:#555;font-weight:bold;font-style:italic;font-family:'Liberation Serif', serif;">x</span>
<div class="a" style="left:250px;top:179px;width:1665px;height:26px;background:#fff;border:1px solid #c6c6c6;box-sizing:border-box;"></div>
<svg class="a" style="left:1902px;top:187px;" width="10" height="8" viewBox="0 0 10 8"><path d="M1.800 2.300l3 3 3-3" stroke="#666" stroke-width="1.700" fill="none"/></svg>
<svg class="a" style="left:10px;top:219px;" width="12" height="12" viewBox="0 0 12 12"><path d="M11.500 0.500v11H0.500z" fill="#d9d9d9"/></svg>
<div class="a" style="left:25px;top:215px;width:1px;height:19px;background:#dadada;"></div>
<div class="a" style="left:791px;top:215px;width:1px;height:19px;background:#dadada;"></div>
<div class="a" style="left:862px;top:215px;width:1px;height:19px;background:#dadada;"></div>
<div class="a" style="left:945px;top:215px;width:1px;height:19px;background:#dadada;"></div>
<div class="a" style="left:1063px;top:215px;width:1px;height:19px;background:#dadada;"></div>
<div class="a" style="left:1145px;top:215px;width:1px;height:19px;background:#dadada;"></div>
<div class="a" style="left:1299px;top:215px;width:1px;height:19px;background:#dadada;"></div>
<div class="a" style="left:1405px;top:215px;width:1px;height:19px;background:#dadada;"></div>
<div class="a" style="left:1469px;top:215px;width:1px;height:19px;background:#dadada;"></div>
<div class="a" style="left:1533px;top:215px;width:1px;height:19px;background:#dadada;"></div>
<div class="a" style="left:1597px;top:215px;width:1px;height:19px;background:#dadada;"></div>
<div class="a" style="left:1661px;top:215px;width:1px;height:19px;background:#dadada;"></div>
<div class="a" style="left:1725px;top:215px;width:1px;height:19px;background:#dadada;"></div>
<div class="a" style="left:1789px;top:215px;width:1px;height:19px;background:#dadada;"></div>
<div class="a" style="left:1853px;top:215px;width:1px;height:19px;background:#dadada;"></div>
<div class="a" style="left:0;top:214px;width:1899px;height:21px;overflow:hidden">
<span class="t" style="left:401px;top:5px;font-size:12.5px;color:#444444;transform:scaleX(0.9);transform-origin:50% 0;">EJ</span>
<span class="t" style="left:819px;top:5px;font-size:12.5px;color:#444444;transform:scaleX(0.9);transform-origin:50% 0;">EK</span>
<span class="t" style="left:897px;top:5px;font-size:12.5px;color:#444444;transform:scaleX(0.9);transform-origin:50% 0;">EL</span>
<span class="t" style="left:995px;top:5px;font-size:12.5px;color:#444444;transform:scaleX(0.9);transform-origin:50% 0;">EM</span>
<span class="t" style="left:1097px;top:5px;font-size:12.5px;color:#444444;transform:scaleX(0.9);transform-origin:50% 0;">EN</span>
<span class="t" style="left:1213px;top:5px;font-size:12.5px;color:#444444;transform:scaleX(0.9);transform-origin:50% 0;">EO</span>
<span class="t" style="left:1344px;top:5px;font-size:12.5px;color:#444444;transform:scaleX(0.9);transform-origin:50% 0;">EP</span>
<span class="t" style="left:1428px;top:5px;font-size:12.5px;color:#444444;transform:scaleX(0.9);transform-origin:50% 0;">EQ</span>
<span class="t" style="left:1494px;top:5px;font-size:12.5px;color:#444444;transform:scaleX(0.9);transform-origin:50% 0;">ER</span>
<span class="t" style="left:1557px;top:5px;font-size:12.5px;color:#444444;transform:scaleX(0.9);transform-origin:50% 0;">ES</span>
<span class="t" style="left:1621px;top:5px;font-size:12.5px;color:#444444;transform:scaleX(0.9);transform-origin:50% 0;">ET</span>
<span class="t" style="left:1686px;top:5px;font-size:12.5px;color:#444444;transform:scaleX(0.9);transform-origin:50% 0;">EU</span>
<span class="t" style="left:1749px;top:5px;font-size:12.5px;color:#444444;transform:scaleX(0.9);transform-origin:50% 0;">EV</span>
<span class="t" style="left:1812px;top:5px;font-size:12.5px;color:#444444;transform:scaleX(0.9);transform-origin:50% 0;">EW</span>
<span class="t" style="left:1877px;top:5px;font-size:12.5px;color:#444444;transform:scaleX(0.9);transform-origin:50% 0;">EX</span>
</div>
<div class="a" style="left:0px;top:254px;width:25px;height:1px;background:#e3e3e3;"></div>
<div class="a" style="left:26px;top:254px;width:1872px;height:1px;background:#d4d4d4;"></div>
<div class="a" style="left:0px;top:274px;width:25px;height:1px;background:#e3e3e3;"></div>
<div class="a" style="left:26px;top:274px;width:1872px;height:1px;background:#d4d4d4;"></div>
<div class="a" style="left:0px;top:294px;width:25px;height:1px;background:#e3e3e3;"></div>
<div class="a" style="left:26px;top:294px;width:1872px;height:1px;background:#d4d4d4;"></div>
<div class="a" style="left:0px;top:314px;width:25px;height:1px;background:#e3e3e3;"></div>
<div class="a" style="left:26px;top:314px;width:1872px;height:1px;background:#d4d4d4;"></div>
<div class="a" style="left:0px;top:334px;width:25px;height:1px;background:#e3e3e3;"></div>
<div class="a" style="left:26px;top:334px;width:1872px;height:1px;background:#d4d4d4;"></div>
<div class="a" style="left:0px;top:354px;width:25px;height:1px;background:#e3e3e3;"></div>
<div class="a" style="left:26px;top:354px;width:1872px;height:1px;background:#d4d4d4;"></div>
<div class="a" style="left:0px;top:374px;width:25px;height:1px;background:#e3e3e3;"></div>
<div class="a" style="left:26px;top:374px;width:1872px;height:1px;background:#d4d4d4;"></div>
<div class="a" style="left:0px;top:394px;width:25px;height:1px;background:#e3e3e3;"></div>
<div class="a" style="left:26px;top:394px;width:1872px;height:1px;background:#d4d4d4;"></div>
<div class="a" style="left:0px;top:414px;width:25px;height:1px;background:#e3e3e3;"></div>
<div class="a" style="left:26px;top:414px;width:1872px;height:1px;background:#d4d4d4;"></div>
<div class="a" style="left:0px;top:434px;width:25px;height:1px;background:#e3e3e3;"></div>
<div class="a" style="left:26px;top:434px;width:1872px;height:1px;background:#d4d4d4;"></div>
<div class="a" style="left:0px;top:454px;width:25px;height:1px;background:#e3e3e3;"></div>
<div class="a" style="left:26px;top:454px;width:1872px;height:1px;background:#d4d4d4;"></div>
<div class="a" style="left:0px;top:474px;width:25px;height:1px;background:#e3e3e3;"></div>
<div class="a" style="left:26px;top:474px;width:1872px;height:1px;background:#d4d4d4;"></div>
<div class="a" style="left:0px;top:494px;width:25px;height:1px;background:#e3e3e3;"></div>
<div class="a" style="left:26px;top:494px;width:1872px;height:1px;background:#d4d4d4;"></div>
<div class="a" style="left:0px;top:514px;width:25px;height:1px;background:#e3e3e3;"></div>
<div class="a" style="left:26px;top:514px;width:1872px;height:1px;background:#d4d4d4;"></div>
<div class="a" style="left:0px;top:534px;width:25px;height:1px;background:#e3e3e3;"></div>
<div class="a" style="left:26px;top:534px;width:1872px;height:1px;background:#d4d4d4;"></div>
<div class="a" style="left:0px;top:554px;width:25px;height:1px;background:#e3e3e3;"></div>
<div class="a" style="left:26px;top:554px;width:1872px;height:1px;background:#d4d4d4;"></div>
<div class="a" style="left:0px;top:574px;width:25px;height:1px;background:#e3e3e3;"></div>
<div class="a" style="left:26px;top:574px;width:1872px;height:1px;background:#d4d4d4;"></div>
<div class="a" style="left:0px;top:594px;width:25px;height:1px;background:#e3e3e3;"></div>
<div class="a" style="left:26px;top:594px;width:1872px;height:1px;background:#d4d4d4;"></div>
<div class="a" style="left:0px;top:614px;width:25px;height:1px;background:#e3e3e3;"></div>
<div class="a" style="left:26px;top:614px;width:1872px;height:1px;background:#d4d4d4;"></div>
<div class="a" style="left:0px;top:634px;width:25px;height:1px;background:#e3e3e3;"></div>
<div class="a" style="left:26px;top:634px;width:1872px;height:1px;background:#d4d4d4;"></div>
<div class="a" style="left:0px;top:654px;width:25px;height:1px;background:#e3e3e3;"></div>
<div class="a" style="left:26px;top:654px;width:1872px;height:1px;background:#d4d4d4;"></div>
<div class="a" style="left:0px;top:674px;width:25px;height:1px;background:#e3e3e3;"></div>
<div class="a" style="left:26px;top:674px;width:1872px;height:1px;background:#d4d4d4;"></div>
<div class="a" style="left:0px;top:694px;width:25px;height:1px;background:#e3e3e3;"></div>
<div class="a" style="left:26px;top:694px;width:1872px;height:1px;background:#d4d4d4;"></div>
<div class="a" style="left:0px;top:714px;width:25px;height:1px;background:#e3e3e3;"></div>
<div class="a" style="left:26px;top:714px;width:1872px;height:1px;background:#d4d4d4;"></div>
<div class="a" style="left:0px;top:734px;width:25px;height:1px;background:#e3e3e3;"></div>
<div class="a" style="left:26px;top:734px;width:1872px;height:1px;background:#d4d4d4;"></div>
<div class="a" style="left:0px;top:754px;width:25px;height:1px;background:#e3e3e3;"></div>
<div class="a" style="left:26px;top:754px;width:1872px;height:1px;background:#d4d4d4;"></div>
<div class="a" style="left:0px;top:774px;width:25px;height:1px;background:#e3e3e3;"></div>
<div class="a" style="left:26px;top:774px;width:1872px;height:1px;background:#d4d4d4;"></div>
<div class="a" style="left:0px;top:794px;width:25px;height:1px;background:#e3e3e3;"></div>
<div class="a" style="left:26px;top:794px;width:1872px;height:1px;background:#d4d4d4;"></div>
<div class="a" style="left:0px;top:814px;width:25px;height:1px;background:#e3e3e3;"></div>
<div class="a" style="left:26px;top:814px;width:1872px;height:1px;background:#d4d4d4;"></div>
<div class="a" style="left:0px;top:834px;width:25px;height:1px;background:#e3e3e3;"></div>
<div class="a" style="left:26px;top:834px;width:1872px;height:1px;background:#d4d4d4;"></div>
<div class="a" style="left:0px;top:854px;width:25px;height:1px;background:#e3e3e3;"></div>
<div class="a" style="left:26px;top:854px;width:1872px;height:1px;background:#d4d4d4;"></div>
<div class="a" style="left:0px;top:874px;width:25px;height:1px;background:#e3e3e3;"></div>
<div class="a" style="left:26px;top:874px;width:1872px;height:1px;background:#d4d4d4;"></div>
<div class="a" style="left:0px;top:894px;width:25px;height:1px;background:#e3e3e3;"></div>
<div class="a" style="left:26px;top:894px;width:1872px;height:1px;background:#d4d4d4;"></div>
<div class="a" style="left:0px;top:914px;width:25px;height:1px;background:#e3e3e3;"></div>
<div class="a" style="left:26px;top:914px;width:1872px;height:1px;background:#d4d4d4;"></div>
<div class="a" style="left:0px;top:934px;width:25px;height:1px;background:#e3e3e3;"></div>
<div class="a" style="left:26px;top:934px;width:1872px;height:1px;background:#d4d4d4;"></div>
<div class="a" style="left:0px;top:954px;width:25px;height:1px;background:#e3e3e3;"></div>
<div class="a" style="left:26px;top:954px;width:1872px;height:1px;background:#d4d4d4;"></div>
<div class="a" style="left:0px;top:974px;width:25px;height:1px;background:#e3e3e3;"></div>
<div class="a" style="left:26px;top:974px;width:1872px;height:1px;background:#d4d4d4;"></div>
<div class="a" style="left:791px;top:235px;width:1px;height:755px;background:#d4d4d4;"></div>
<div class="a" style="left:862px;top:235px;width:1px;height:755px;background:#d4d4d4;"></div>
<div class="a" style="left:945px;top:235px;width:1px;height:755px;background:#d4d4d4;"></div>
<div class="a" style="left:1063px;top:235px;width:1px;height:755px;background:#d4d4d4;"></div>
<div class="a" style="left:1145px;top:235px;width:1px;height:755px;background:#d4d4d4;"></div>
<div class="a" style="left:1299px;top:235px;width:1px;height:755px;background:#d4d4d4;"></div>
<div class="a" style="left:1405px;top:235px;width:1px;height:755px;background:#d4d4d4;"></div>
<div class="a" style="left:1469px;top:235px;width:1px;height:755px;background:#d4d4d4;"></div>
<div class="a" style="left:1533px;top:235px;width:1px;height:755px;background:#d4d4d4;"></div>
<div class="a" style="left:1597px;top:235px;width:1px;height:755px;background:#d4d4d4;"></div>
<div class="a" style="left:1661px;top:235px;width:1px;height:755px;background:#d4d4d4;"></div>
<div class="a" style="left:1725px;top:235px;width:1px;height:755px;background:#d4d4d4;"></div>
<div class="a" style="left:1789px;top:235px;width:1px;height:755px;background:#d4d4d4;"></div>
<div class="a" style="left:1853px;top:235px;width:1px;height:755px;background:#d4d4d4;"></div>
<div class="a" style="left:0px;top:234px;width:25px;height:1px;background:#d8d8d8;"></div>
<div class="a" style="left:25px;top:234px;width:1874px;height:1px;background:#ababab;"></div>
<div class="a" style="left:25px;top:215px;width:1px;height:19px;background:#d4d4d4;"></div>
<div class="a" style="left:25px;top:234px;width:1px;height:756px;background:#a3a3a3;"></div>
<div class="a" style="left:1898px;top:235px;width:1px;height:755px;background:#ababab;"></div>
<div class="a" style="left:0px;top:990px;width:1899px;height:1px;background:#ababab;"></div>
<div class="a" style="left:26px;top:254px;width:1872px;height:1px;background:#000;"></div>
<div class="a" style="left:791px;top:235px;width:1px;height:20px;background:#000;"></div>
<div class="a" style="left:862px;top:235px;width:1px;height:20px;background:#000;"></div>
<div class="a" style="left:945px;top:235px;width:1px;height:20px;background:#000;"></div>
<div class="a" style="left:1063px;top:235px;width:1px;height:20px;background:#000;"></div>
<div class="a" style="left:1145px;top:235px;width:1px;height:20px;background:#000;"></div>
<div class="a" style="left:1299px;top:235px;width:1px;height:20px;background:#000;"></div>
<div class="a" style="left:1405px;top:235px;width:1px;height:20px;background:#000;"></div>
<div class="a" style="left:1469px;top:235px;width:1px;height:20px;background:#000;"></div>
<div class="a" style="left:1533px;top:235px;width:1px;height:20px;background:#000;"></div>
<div class="a" style="left:1597px;top:235px;width:1px;height:20px;background:#000;"></div>
<div class="a" style="left:1661px;top:235px;width:1px;height:20px;background:#000;"></div>
<div class="a" style="left:1725px;top:235px;width:1px;height:20px;background:#000;"></div>
<div class="a" style="left:1789px;top:235px;width:1px;height:20px;background:#000;"></div>
<div class="a" style="left:1853px;top:235px;width:1px;height:20px;background:#000;"></div>
<div class="a" style="left:0px;top:655px;width:24px;height:19px;background:#e1e1e1;"></div>
<div class="a" style="left:24px;top:654px;width:2px;height:21px;background:#217346;"></div>
<div class="a" style="left:0;top:235px;width:25px;height:755px;overflow:hidden">
<span class="t" style="left:9px;top:5px;font-size:12px;color:#444444;transform:scaleX(0.93);transform-origin:50% 0;">1</span>
<span class="t" style="left:9px;top:25px;font-size:12px;color:#444444;transform:scaleX(0.93);transform-origin:50% 0;">2</span>
<span class="t" style="left:9px;top:45px;font-size:12px;color:#444444;transform:scaleX(0.93);transform-origin:50% 0;">3</span>
<span class="t" style="left:9px;top:65px;font-size:12px;color:#444444;transform:scaleX(0.93);transform-origin:50% 0;">4</span>
<span class="t" style="left:9px;top:85px;font-size:12px;color:#444444;transform:scaleX(0.93);transform-origin:50% 0;">5</span>
<span class="t" style="left:9px;top:105px;font-size:12px;color:#444444;transform:scaleX(0.93);transform-origin:50% 0;">6</span>
<span class="t" style="left:9px;top:125px;font-size:12px;color:#444444;transform:scaleX(0.93);transform-origin:50% 0;">7</span>
<span class="t" style="left:9px;top:145px;font-size:12px;color:#444444;transform:scaleX(0.93);transform-origin:50% 0;">8</span>
<span class="t" style="left:9px;top:165px;font-size:12px;color:#444444;transform:scaleX(0.93);transform-origin:50% 0;">9</span>
<span class="t" style="left:6px;top:185px;font-size:12px;color:#444444;transform:scaleX(0.93);transform-origin:50% 0;">10</span>
<span class="t" style="left:7px;top:205px;font-size:12px;color:#444444;transform:scaleX(0.93);transform-origin:50% 0;">11</span>
<span class="t" style="left:6px;top:225px;font-size:12px;color:#444444;transform:scaleX(0.93);transform-origin:50% 0;">12</span>
<span class="t" style="left:6px;top:245px;font-size:12px;color:#444444;transform:scaleX(0.93);transform-origin:50% 0;">13</span>
<span class="t" style="left:6px;top:265px;font-size:12px;color:#444444;transform:scaleX(0.93);transform-origin:50% 0;">14</span>
<span class="t" style="left:6px;top:285px;font-size:12px;color:#444444;transform:scaleX(0.93);transform-origin:50% 0;">15</span>
<span class="t" style="left:6px;top:305px;font-size:12px;color:#444444;transform:scaleX(0.93);transform-origin:50% 0;">16</span>
<span class="t" style="left:6px;top:325px;font-size:12px;color:#444444;transform:scaleX(0.93);transform-origin:50% 0;">17</span>
<span class="t" style="left:6px;top:345px;font-size:12px;color:#444444;transform:scaleX(0.93);transform-origin:50% 0;">18</span>
<span class="t" style="left:6px;top:365px;font-size:12px;color:#444444;transform:scaleX(0.93);transform-origin:50% 0;">19</span>
<span class="t" style="left:6px;top:385px;font-size:12px;color:#444444;transform:scaleX(0.93);transform-origin:50% 0;">20</span>
<span class="t" style="left:6px;top:405px;font-size:12px;color:#444444;transform:scaleX(0.93);transform-origin:50% 0;">21</span>
<span class="t" style="left:5px;top:425px;font-size:12px;color:#217346;font-weight:bold;transform:translateX(0.67px) scaleX(1.0868);">22</span>
<span class="t" style="left:6px;top:445px;font-size:12px;color:#444444;transform:scaleX(0.93);transform-origin:50% 0;">23</span>
<span class="t" style="left:6px;top:465px;font-size:12px;color:#444444;transform:scaleX(0.93);transform-origin:50% 0;">24</span>
<span class="t" style="left:6px;top:485px;font-size:12px;color:#444444;transform:scaleX(0.93);transform-origin:50% 0;">25</span>
<span class="t" style="left:6px;top:505px;font-size:12px;color:#444444;transform:scaleX(0.93);transform-origin:50% 0;">26</span>
<span class="t" style="left:6px;top:525px;font-size:12px;color:#444444;transform:scaleX(0.93);transform-origin:50% 0;">27</span>
<span class="t" style="left:6px;top:545px;font-size:12px;color:#444444;transform:scaleX(0.93);transform-origin:50% 0;">28</span>
<span class="t" style="left:6px;top:565px;font-size:12px;color:#444444;transform:scaleX(0.93);transform-origin:50% 0;">29</span>
<span class="t" style="left:6px;top:585px;font-size:12px;color:#444444;transform:scaleX(0.93);transform-origin:50% 0;">30</span>
<span class="t" style="left:6px;top:605px;font-size:12px;color:#444444;transform:scaleX(0.93);transform-origin:50% 0;">31</span>
<span class="t" style="left:6px;top:625px;font-size:12px;color:#444444;transform:scaleX(0.93);transform-origin:50% 0;">32</span>
<span class="t" style="left:6px;top:645px;font-size:12px;color:#444444;transform:scaleX(0.93);transform-origin:50% 0;">33</span>
<span class="t" style="left:6px;top:665px;font-size:12px;color:#444444;transform:scaleX(0.93);transform-origin:50% 0;">34</span>
<span class="t" style="left:6px;top:685px;font-size:12px;color:#444444;transform:scaleX(0.93);transform-origin:50% 0;">35</span>
<span class="t" style="left:6px;top:705px;font-size:12px;color:#444444;transform:scaleX(0.93);transform-origin:50% 0;">36</span>
<span class="t" style="left:6px;top:725px;font-size:12px;color:#444444;transform:scaleX(0.93);transform-origin:50% 0;">37</span>
<span class="t" style="left:6px;top:745px;font-size:12px;color:#444444;transform:scaleX(0.93);transform-origin:50% 0;">38</span>
</div>
<span class="t" style="left:27px;top:240px;font-size:12.6px;color:#000;font-weight:bold;transform:translateX(0.90px) scaleX(1.0025);">Address_7</span>
<span class="t" style="left:793px;top:240px;font-size:12.6px;color:#000;font-weight:bold;transform:translateX(0.90px) scaleX(0.9969);">Address_8</span>
<span class="t" style="left:864px;top:240px;font-size:12.6px;color:#000;font-weight:bold;transform:translateX(0.90px) scaleX(1.0061);">Address_9</span>
<span class="t" style="left:947px;top:240px;font-size:12.6px;color:#000;font-weight:bold;transform:translateX(0.90px) scaleX(1.0122);">Address_10</span>
<span class="t" style="left:1065px;top:240px;font-size:12.6px;color:#000;font-weight:bold;transform:translateX(0.90px) scaleX(1.0403);">MSME Code</span>
<span class="t" style="left:1147px;top:240px;font-size:12.6px;color:#000;font-weight:bold;transform:translateX(0.90px) scaleX(1.0381);">MSME Description</span>
<span class="t" style="left:1301px;top:240px;font-size:12.6px;color:#000;font-weight:bold;transform:translateX(0.90px) scaleX(1.0289);">MSME Category</span>
<span class="t" style="left:27px;top:280px;font-size:12.6px;color:#000;transform:translateX(0.90px) scaleX(0.9760);-webkit-text-stroke:0.3px;">BUILDING NO-G/15 GANESH CO-OP HOUSING SOCIETY ROOM NO-304 GHANSOLI GHARONDA CHS SECTOR-09 SIMPLEX NR</span>
<span class="t" style="left:27px;top:320px;font-size:12.6px;color:#000;transform:translateX(0.90px) scaleX(1.0158);-webkit-text-stroke:0.3px;">M3 MANGEMENY  CONSULTANY MUMBAI</span>
<span class="t" style="left:27px;top:360px;font-size:12.6px;color:#000;transform:translateX(0.90px) scaleX(0.9734);-webkit-text-stroke:0.3px;">KHARGHAR RAIGARH</span>
<span class="t" style="left:27px;top:400px;font-size:12.6px;color:#000;transform:translateX(0.90px) scaleX(0.9760);-webkit-text-stroke:0.3px;">BUILDING NO-G/15 GANESH CO-OP HOUSING SOCIETY ROOM NO-304 GHANSOLI GHARONDA CHS SECTOR-09 SIMPLEX NR</span>
<span class="t" style="left:27px;top:440px;font-size:12.6px;color:#0000cc;font-weight:bold;transform:translateX(0.90px) scaleX(0.9825);">101 FLR 1ST 3/4 LOHA BHAVAN BUILDING P D MELLO ROAD MUSJID BUNDER E MUMBAI</span>
<span class="t" style="left:27px;top:460px;font-size:12.6px;color:#000;transform:translateX(0.90px) scaleX(0.9623);-webkit-text-stroke:0.3px;">136105 B SHREE SHRUTI TOWER GOAD BUNDER0219ROAD KASERWADVLI 75 75</span>
<span class="t" style="left:27px;top:560px;font-size:12.6px;color:#000;transform:translateX(0.90px) scaleX(0.9967);-webkit-text-stroke:0.3px;">4,BHUSHAN APPT,GRN FLOR FLR,JASAI,BELPAD URAN,VODAFONE MOB TOWER NAVI MUMBAI</span>
<span class="t" style="left:27px;top:640px;font-size:12.6px;color:#ff00ff;font-weight:bold;transform:translateX(0.90px) scaleX(1.0025);">DEFINITION GYM 3D SUJAY GARDEN MUKUND NAGAR PUNE</span>
<span class="t" style="left:803px;top:280px;font-size:12.6px;color:#000;transform:translateX(0.51px) scaleX(1.0150);-webkit-text-stroke:0.3px;">88077250</span>
<span class="t" style="left:796px;top:300px;font-size:12.6px;color:#000;transform:translateX(0.41px) scaleX(1.0150);-webkit-text-stroke:0.3px;">163869727</span>
<span class="t" style="left:810px;top:320px;font-size:12.6px;color:#000;transform:translateX(0.63px) scaleX(1.0150);-webkit-text-stroke:0.3px;">1412741</span>
<span class="t" style="left:796px;top:340px;font-size:12.6px;color:#000;transform:translateX(0.41px) scaleX(1.0150);-webkit-text-stroke:0.3px;">169620935</span>
<span class="t" style="left:797px;top:360px;font-size:12.6px;color:#000;transform:translateX(0.36px) scaleX(1.0150);-webkit-text-stroke:0.3px;">165491196</span>
<span class="t" style="left:796px;top:380px;font-size:12.6px;color:#0000cc;font-weight:bold;transform:translateX(0.41px) scaleX(1.0150);">166798370</span>
<span class="t" style="left:803px;top:400px;font-size:12.6px;color:#000;transform:translateX(0.51px) scaleX(1.0150);-webkit-text-stroke:0.3px;">88077250</span>
<span class="t" style="left:797px;top:420px;font-size:12.6px;color:#ff00ff;font-weight:bold;transform:translateX(0.12px) scaleX(1.0150);">161311351</span>
<span class="t" style="left:796px;top:440px;font-size:12.6px;color:#0000cc;font-weight:bold;transform:translateX(0.41px) scaleX(1.0150);">148874572</span>
<span class="t" style="left:796px;top:460px;font-size:12.6px;color:#000;transform:translateX(0.41px) scaleX(1.0150);-webkit-text-stroke:0.3px;">157705324</span>
<span class="t" style="left:796px;top:480px;font-size:12.6px;color:#000;transform:translateX(0.41px) scaleX(1.0150);-webkit-text-stroke:0.3px;">158179529</span>
<span class="t" style="left:796px;top:500px;font-size:12.6px;color:#000;transform:translateX(0.41px) scaleX(1.0150);-webkit-text-stroke:0.3px;">148237973</span>
<span class="t" style="left:796px;top:520px;font-size:12.6px;color:#000;transform:translateX(0.41px) scaleX(1.0150);-webkit-text-stroke:0.3px;">159783422</span>
<span class="t" style="left:796px;top:540px;font-size:12.6px;color:#000;transform:translateX(0.41px) scaleX(1.0150);-webkit-text-stroke:0.3px;">162350810</span>
<span class="t" style="left:797px;top:560px;font-size:12.6px;color:#000;transform:translateX(0.36px) scaleX(1.0150);-webkit-text-stroke:0.3px;">115300703</span>
<span class="t" style="left:796px;top:620px;font-size:12.6px;color:#000;transform:translateX(0.41px) scaleX(1.0150);-webkit-text-stroke:0.3px;">134060297</span>
<span class="t" style="left:803px;top:640px;font-size:12.6px;color:#ff00ff;font-weight:bold;transform:translateX(0.51px) scaleX(1.0150);">17768358</span>
<span class="t" style="left:796px;top:680px;font-size:12.6px;color:#000;transform:translateX(0.41px) scaleX(1.0150);-webkit-text-stroke:0.3px;">157948719</span>
<span class="t" style="left:796px;top:700px;font-size:12.6px;color:#000;transform:translateX(0.41px) scaleX(1.0150);-webkit-text-stroke:0.3px;">138765341</span>
<span class="t" style="left:864px;top:280px;font-size:12.6px;color:#000;transform:translateX(0.90px) scaleX(0.9879);-webkit-text-stroke:0.3px;">AUTO-DEBIT</span>
<span class="t" style="left:947px;top:280px;font-size:12.6px;color:#000;transform:translateX(0.90px) scaleX(0.9819);-webkit-text-stroke:0.3px;">DIGITAL NASCENT</span>
<span class="t" style="left:864px;top:300px;font-size:12.6px;color:#000;transform:translateX(0.90px) scaleX(0.8757);-webkit-text-stroke:0.3px;">ECS</span>
<span class="t" style="left:947px;top:300px;font-size:12.6px;color:#000;transform:translateX(0.90px) scaleX(0.9819);-webkit-text-stroke:0.3px;">DIGITAL NASCENT</span>
<span class="t" style="left:864px;top:320px;font-size:12.6px;color:#000;transform:translateX(0.90px) scaleX(0.9879);-webkit-text-stroke:0.3px;">AUTO-DEBIT</span>
<span class="t" style="left:947px;top:320px;font-size:12.6px;color:#000;transform:translateX(0.90px) scaleX(0.9819);-webkit-text-stroke:0.3px;">DIGITAL NASCENT</span>
<span class="t" style="left:864px;top:340px;font-size:12.6px;color:#000;transform:translateX(0.90px) scaleX(0.9879);-webkit-text-stroke:0.3px;">AUTO-DEBIT</span>
<span class="t" style="left:947px;top:340px;font-size:12.6px;color:#000;transform:translateX(0.90px) scaleX(0.9819);-webkit-text-stroke:0.3px;">DIGITAL NASCENT</span>
<span class="t" style="left:864px;top:360px;font-size:12.6px;color:#000;transform:translateX(0.90px) scaleX(0.9879);-webkit-text-stroke:0.3px;">AUTO-DEBIT</span>
<span class="t" style="left:947px;top:360px;font-size:12.6px;color:#000;transform:translateX(0.90px) scaleX(0.9819);-webkit-text-stroke:0.3px;">DIGITAL NASCENT</span>
<span class="t" style="left:864px;top:380px;font-size:12.6px;color:#0000cc;font-weight:bold;transform:translateX(0.90px) scaleX(0.9082);">ECS</span>
<span class="t" style="left:947px;top:380px;font-size:12.6px;color:#0000cc;font-weight:bold;transform:translateX(0.90px) scaleX(0.9693);">DIGITAL NASCENT</span>
<span class="t" style="left:864px;top:400px;font-size:12.6px;color:#000;transform:translateX(0.90px) scaleX(0.9879);-webkit-text-stroke:0.3px;">AUTO-DEBIT</span>
<span class="t" style="left:947px;top:400px;font-size:12.6px;color:#000;transform:translateX(0.90px) scaleX(0.9819);-webkit-text-stroke:0.3px;">DIGITAL NASCENT</span>
<span class="t" style="left:864px;top:420px;font-size:12.6px;color:#ff00ff;font-weight:bold;transform:translateX(0.90px) scaleX(0.9113);">ECS</span>
<span class="t" style="left:947px;top:420px;font-size:12.6px;color:#ff00ff;font-weight:bold;transform:translateX(0.90px) scaleX(0.9722);">DIGITAL NASCENT</span>
<span class="t" style="left:864px;top:440px;font-size:12.6px;color:#0000cc;font-weight:bold;transform:translateX(0.90px) scaleX(0.9866);">AUTO-DEBIT</span>
<span class="t" style="left:947px;top:440px;font-size:12.6px;color:#0000cc;font-weight:bold;transform:translateX(0.90px) scaleX(0.9693);">DIGITAL NASCENT</span>
<span class="t" style="left:864px;top:460px;font-size:12.6px;color:#000;transform:translateX(0.90px) scaleX(0.9879);-webkit-text-stroke:0.3px;">AUTO-DEBIT</span>
<span class="t" style="left:947px;top:460px;font-size:12.6px;color:#000;transform:translateX(0.90px) scaleX(0.9819);-webkit-text-stroke:0.3px;">DIGITAL NASCENT</span>
<span class="t" style="left:864px;top:480px;font-size:12.6px;color:#000;transform:translateX(0.90px) scaleX(0.8757);-webkit-text-stroke:0.3px;">ECS</span>
<span class="t" style="left:947px;top:480px;font-size:12.6px;color:#000;transform:translateX(0.90px) scaleX(0.9819);-webkit-text-stroke:0.3px;">DIGITAL NASCENT</span>
<span class="t" style="left:864px;top:500px;font-size:12.6px;color:#000;transform:translateX(0.90px) scaleX(0.9327);-webkit-text-stroke:0.3px;">SI</span>
<span class="t" style="left:947px;top:500px;font-size:12.6px;color:#000;transform:translateX(0.90px) scaleX(0.9819);-webkit-text-stroke:0.3px;">DIGITAL NASCENT</span>
<span class="t" style="left:864px;top:520px;font-size:12.6px;color:#000;transform:translateX(0.90px) scaleX(0.8757);-webkit-text-stroke:0.3px;">ECS</span>
<span class="t" style="left:947px;top:520px;font-size:12.6px;color:#000;transform:translateX(0.90px) scaleX(0.9819);-webkit-text-stroke:0.3px;">DIGITAL NASCENT</span>
<span class="t" style="left:864px;top:540px;font-size:12.6px;color:#000;transform:translateX(0.90px) scaleX(0.8757);-webkit-text-stroke:0.3px;">ECS</span>
<span class="t" style="left:947px;top:540px;font-size:12.6px;color:#000;transform:translateX(0.90px) scaleX(0.9819);-webkit-text-stroke:0.3px;">DIGITAL NASCENT</span>
<span class="t" style="left:864px;top:560px;font-size:12.6px;color:#000;transform:translateX(0.90px) scaleX(0.9879);-webkit-text-stroke:0.3px;">AUTO-DEBIT</span>
<span class="t" style="left:947px;top:560px;font-size:12.6px;color:#000;transform:translateX(0.90px) scaleX(0.9819);-webkit-text-stroke:0.3px;">DIGITAL NASCENT</span>
<span class="t" style="left:864px;top:620px;font-size:12.6px;color:#000;transform:translateX(0.90px) scaleX(0.9327);-webkit-text-stroke:0.3px;">SI</span>
<span class="t" style="left:947px;top:620px;font-size:12.6px;color:#000;transform:translateX(0.90px) scaleX(0.9819);-webkit-text-stroke:0.3px;">DIGITAL NASCENT</span>
<span class="t" style="left:864px;top:640px;font-size:12.6px;color:#ff00ff;font-weight:bold;transform:translateX(0.90px) scaleX(0.9885);">AUTO-DEBIT</span>
<span class="t" style="left:947px;top:640px;font-size:12.6px;color:#ff00ff;font-weight:bold;transform:translateX(0.90px) scaleX(0.9722);">DIGITAL NASCENT</span>
<span class="t" style="left:864px;top:680px;font-size:12.6px;color:#000;transform:translateX(0.90px) scaleX(0.8757);-webkit-text-stroke:0.3px;">ECS</span>
<span class="t" style="left:947px;top:680px;font-size:12.6px;color:#000;transform:translateX(0.90px) scaleX(0.9819);-webkit-text-stroke:0.3px;">DIGITAL NASCENT</span>
<span class="t" style="left:864px;top:700px;font-size:12.6px;color:#000;transform:translateX(0.90px) scaleX(0.9327);-webkit-text-stroke:0.3px;">SI</span>
<span class="t" style="left:947px;top:700px;font-size:12.6px;color:#000;transform:translateX(0.90px) scaleX(0.9819);-webkit-text-stroke:0.3px;">DIGITAL NASCENT</span>
<span class="t" style="left:1065px;top:280px;font-size:12.6px;color:#000;transform:translateX(0.90px) scaleX(0.9384);-webkit-text-stroke:0.3px;">OPMCRSER</span>
<span class="t" style="left:1147px;top:280px;font-size:12.6px;color:#000;transform:translateX(0.90px) scaleX(0.9226);-webkit-text-stroke:0.3px;">MICRO ENTERPRISE SER</span>
<span class="t" style="left:1301px;top:280px;font-size:12.6px;color:#000;transform:translateX(0.90px) scaleX(0.9493);-webkit-text-stroke:0.3px;">MICRO SERVICE</span>
<span class="t" style="left:1065px;top:320px;font-size:12.6px;color:#000;transform:translateX(0.90px) scaleX(0.9384);-webkit-text-stroke:0.3px;">OPMCRSER</span>
<span class="t" style="left:1147px;top:320px;font-size:12.6px;color:#000;transform:translateX(0.90px) scaleX(0.9226);-webkit-text-stroke:0.3px;">MICRO ENTERPRISE SER</span>
<span class="t" style="left:1301px;top:320px;font-size:12.6px;color:#000;transform:translateX(0.90px) scaleX(0.9493);-webkit-text-stroke:0.3px;">MICRO SERVICE</span>
<span class="t" style="left:1065px;top:340px;font-size:12.6px;color:#000;transform:translateX(0.90px) scaleX(0.9384);-webkit-text-stroke:0.3px;">OPMCRSER</span>
<span class="t" style="left:1147px;top:340px;font-size:12.6px;color:#000;transform:translateX(0.90px) scaleX(0.9226);-webkit-text-stroke:0.3px;">MICRO ENTERPRISE SER</span>
<span class="t" style="left:1301px;top:340px;font-size:12.6px;color:#000;transform:translateX(0.90px) scaleX(0.9493);-webkit-text-stroke:0.3px;">MICRO SERVICE</span>
<span class="t" style="left:1065px;top:360px;font-size:12.6px;color:#000;transform:translateX(0.90px) scaleX(0.9384);-webkit-text-stroke:0.3px;">OPMCRSER</span>
<span class="t" style="left:1147px;top:360px;font-size:12.6px;color:#000;transform:translateX(0.90px) scaleX(0.9226);-webkit-text-stroke:0.3px;">MICRO ENTERPRISE SER</span>
<span class="t" style="left:1301px;top:360px;font-size:12.6px;color:#000;transform:translateX(0.90px) scaleX(0.9493);-webkit-text-stroke:0.3px;">MICRO SERVICE</span>
<span class="t" style="left:1065px;top:380px;font-size:12.6px;color:#0000cc;font-weight:bold;transform:translateX(0.90px) scaleX(0.9460);">OPMCRSER</span>
<span class="t" style="left:1147px;top:380px;font-size:12.6px;color:#0000cc;font-weight:bold;transform:translateX(0.90px) scaleX(0.9296);">MICRO ENTERPRISE SER</span>
<span class="t" style="left:1301px;top:380px;font-size:12.6px;color:#0000cc;font-weight:bold;transform:translateX(0.90px) scaleX(0.9588);">MICRO SERVICE</span>
<span class="t" style="left:1065px;top:440px;font-size:12.6px;color:#0000cc;font-weight:bold;transform:translateX(0.90px) scaleX(0.9460);">OPMCRSER</span>
<span class="t" style="left:1147px;top:440px;font-size:12.6px;color:#0000cc;font-weight:bold;transform:translateX(0.90px) scaleX(0.9296);">MICRO ENTERPRISE SER</span>
<span class="t" style="left:1301px;top:440px;font-size:12.6px;color:#0000cc;font-weight:bold;transform:translateX(0.90px) scaleX(0.9588);">MICRO SERVICE</span>
<span class="t" style="left:1065px;top:460px;font-size:12.6px;color:#000;transform:translateX(0.90px) scaleX(0.9384);-webkit-text-stroke:0.3px;">OPMCRSER</span>
<span class="t" style="left:1147px;top:460px;font-size:12.6px;color:#000;transform:translateX(0.90px) scaleX(0.9226);-webkit-text-stroke:0.3px;">MICRO ENTERPRISE SER</span>
<span class="t" style="left:1301px;top:460px;font-size:12.6px;color:#000;transform:translateX(0.90px) scaleX(0.9493);-webkit-text-stroke:0.3px;">MICRO SERVICE</span>
<span class="t" style="left:1065px;top:480px;font-size:12.6px;color:#000;transform:translateX(0.90px) scaleX(0.9384);-webkit-text-stroke:0.3px;">OPMCRSER</span>
<span class="t" style="left:1147px;top:480px;font-size:12.6px;color:#000;transform:translateX(0.90px) scaleX(0.9226);-webkit-text-stroke:0.3px;">MICRO ENTERPRISE SER</span>
<span class="t" style="left:1301px;top:480px;font-size:12.6px;color:#000;transform:translateX(0.90px) scaleX(0.9493);-webkit-text-stroke:0.3px;">MICRO SERVICE</span>
<span class="t" style="left:1065px;top:500px;font-size:12.6px;color:#000;transform:translateX(0.90px) scaleX(0.9384);-webkit-text-stroke:0.3px;">OPMCRSER</span>
<span class="t" style="left:1147px;top:500px;font-size:12.6px;color:#000;transform:translateX(0.90px) scaleX(0.9226);-webkit-text-stroke:0.3px;">MICRO ENTERPRISE SER</span>
<span class="t" style="left:1301px;top:500px;font-size:12.6px;color:#000;transform:translateX(0.90px) scaleX(0.9493);-webkit-text-stroke:0.3px;">MICRO SERVICE</span>
<span class="t" style="left:1065px;top:560px;font-size:12.6px;color:#000;transform:translateX(0.90px) scaleX(0.9384);-webkit-text-stroke:0.3px;">OPMCRSER</span>
<span class="t" style="left:1147px;top:560px;font-size:12.6px;color:#000;transform:translateX(0.90px) scaleX(0.9226);-webkit-text-stroke:0.3px;">MICRO ENTERPRISE SER</span>
<span class="t" style="left:1301px;top:560px;font-size:12.6px;color:#000;transform:translateX(0.90px) scaleX(0.9493);-webkit-text-stroke:0.3px;">MICRO SERVICE</span>
<span class="t" style="left:1065px;top:580px;font-size:12.6px;color:#000;transform:translateX(0.90px) scaleX(0.9384);-webkit-text-stroke:0.3px;">OPMCRSER</span>
<span class="t" style="left:1147px;top:580px;font-size:12.6px;color:#000;transform:translateX(0.90px) scaleX(0.9226);-webkit-text-stroke:0.3px;">MICRO ENTERPRISE SER</span>
<span class="t" style="left:1301px;top:580px;font-size:12.6px;color:#000;transform:translateX(0.90px) scaleX(0.9493);-webkit-text-stroke:0.3px;">MICRO SERVICE</span>
<span class="t" style="left:1065px;top:620px;font-size:12.6px;color:#000;transform:translateX(0.90px) scaleX(0.9384);-webkit-text-stroke:0.3px;">OPMCRSER</span>
<span class="t" style="left:1147px;top:620px;font-size:12.6px;color:#000;transform:translateX(0.90px) scaleX(0.9226);-webkit-text-stroke:0.3px;">MICRO ENTERPRISE SER</span>
<span class="t" style="left:1301px;top:620px;font-size:12.6px;color:#000;transform:translateX(0.90px) scaleX(0.9493);-webkit-text-stroke:0.3px;">MICRO SERVICE</span>
<span class="t" style="left:1065px;top:680px;font-size:12.6px;color:#000;transform:translateX(0.90px) scaleX(0.9384);-webkit-text-stroke:0.3px;">OPMCRSER</span>
<span class="t" style="left:1147px;top:680px;font-size:12.6px;color:#000;transform:translateX(0.90px) scaleX(0.9226);-webkit-text-stroke:0.3px;">MICRO ENTERPRISE SER</span>
<span class="t" style="left:1301px;top:680px;font-size:12.6px;color:#000;transform:translateX(0.90px) scaleX(0.9493);-webkit-text-stroke:0.3px;">MICRO SERVICE</span>
<span class="t" style="left:1065px;top:700px;font-size:12.6px;color:#000;transform:translateX(0.90px) scaleX(0.9384);-webkit-text-stroke:0.3px;">OPMCRSER</span>
<span class="t" style="left:1147px;top:700px;font-size:12.6px;color:#000;transform:translateX(0.90px) scaleX(0.9226);-webkit-text-stroke:0.3px;">MICRO ENTERPRISE SER</span>
<span class="t" style="left:1301px;top:700px;font-size:12.6px;color:#000;transform:translateX(0.90px) scaleX(0.9493);-webkit-text-stroke:0.3px;">MICRO SERVICE</span>
<div class="a" style="left:1902px;top:217px;width:15px;height:774px;background:#f3f3f3;"></div>
<div class="a" style="left:1902px;top:217px;width:15px;height:15px;background:#fff;border:1px solid #c6c6c6;box-sizing:border-box;"></div>
<svg class="a" style="left:1905px;top:222px;" width="9" height="5" viewBox="0 0 9 5"><path d="M0.500 4.500L4.500 0.500l4 4z" fill="#777"/></svg>
<div class="a" style="left:1902px;top:232px;width:15px;height:723px;background:#fff;border:1px solid #ababab;box-sizing:border-box;"></div>
<div class="a" style="left:1902px;top:976px;width:15px;height:15px;background:#fff;border:1px solid #c6c6c6;box-sizing:border-box;"></div>
<svg class="a" style="left:1905px;top:981px;" width="9" height="5" viewBox="0 0 9 5"><path d="M0.500 0.500h8l-4 4z" fill="#777"/></svg>
<span class="t" style="left:1599px;top:948px;font-size:20.5px;color:rgba(120,120,120,0.46);transform:translateX(0.07px) scaleX(0.9751);">Activate Windows</span>
<span class="t" style="left:1599px;top:974px;font-size:14.8px;color:rgba(120,120,120,0.42);transform:translateX(0.11px) scaleX(1.0120);">Go to Settings to activate Windows.</span>
<div class="a" style="left:0px;top:991px;width:1920px;height:27px;background:#f5f5f5;"></div>
<svg class="a" style="left:26px;top:999px;" width="6" height="9" viewBox="0 0 6 9"><path d="M5.500 0.500v8L1 4.500z" fill="#c6c6c6"/></svg>
<svg class="a" style="left:55px;top:999px;" width="6" height="9" viewBox="0 0 6 9"><path d="M0.500 0.500v8L5 4.500z" fill="#c6c6c6"/></svg>
<div class="a" style="left:100px;top:990px;width:66px;height:23px;background:#fff;border-left:1px solid #ababab;border-right:1px solid #ababab;box-sizing:border-box;"></div>
<div class="a" style="left:100px;top:1013px;width:66px;height:2px;background:#217346;"></div>
<span class="t" style="left:112px;top:998px;font-size:12.5px;color:#217346;font-weight:bold;transform:translateX(0.64px) scaleX(0.9674);-webkit-text-stroke:0.35px;">Sheet1</span>
<span class="t" style="left:178px;top:998px;font-size:12.5px;color:#444444;transform:translateX(0.20px) scaleX(0.9727);">Sheet2</span>
<div class="a" style="left:229px;top:994px;width:1px;height:20px;background:#ababab;"></div>
<svg class="a" style="left:262px;top:995px;" width="18" height="18" viewBox="0 0 18 18"><circle cx="9" cy="9" r="7.500" fill="none" stroke="#666" stroke-width="1.200"/><path d="M5 9h8M9 5v8" stroke="#666" stroke-width="1.600"/></svg>
<div class="a" style="left:1152px;top:999px;width:2px;height:2px;background:#a6a6a6;"></div>
<div class="a" style="left:1152px;top:1003px;width:2px;height:2px;background:#a6a6a6;"></div>
<div class="a" style="left:1152px;top:1007px;width:2px;height:2px;background:#a6a6a6;"></div>
<div class="a" style="left:1169px;top:997px;width:730px;height:15px;background:#e8e8e8;"></div>
<div class="a" style="left:1169px;top:997px;width:15px;height:15px;background:#fff;border:1px solid #ababab;box-sizing:border-box;"></div>
<svg class="a" style="left:1173px;top:1000px;" width="6" height="9" viewBox="0 0 6 9"><path d="M5.500 0.500v8L1 4.500z" fill="#666"/></svg>
<div class="a" style="left:1820px;top:997px;width:64px;height:15px;background:#fff;border:1px solid #ababab;box-sizing:border-box;"></div>
<div class="a" style="left:1884px;top:997px;width:15px;height:15px;background:#fff;border:1px solid #ababab;box-sizing:border-box;"></div>
<svg class="a" style="left:1889px;top:1000px;" width="6" height="9" viewBox="0 0 6 9"><path d="M0.500 0.500v8L5 4.500z" fill="#666"/></svg>
<div class="a" style="left:0px;top:1018px;width:1920px;height:22px;background:#217346;"></div>
<span class="t" style="left:7px;top:1024px;font-size:11px;color:#fff;transform:translateX(0.41px) scaleX(0.8726);">READY</span>
<div class="a" style="left:1628px;top:1018px;width:38px;height:22px;background:#0e6534;"></div>
<svg class="a" style="left:1640px;top:1022px;" width="14" height="14" viewBox="0 0 14 14"><path d="M0.500 0.500h12v12H0.500zM0.500 4.500h12M0.500 8.500h12M4.500 0.500v12M8.500 0.500v12" fill="none" stroke="#fff" stroke-width="1"/></svg>
<svg class="a" style="left:1677px;top:1022px;" width="16" height="14" viewBox="0 0 16 14"><rect x="1.500" y="0.500" width="13" height="12" fill="none" stroke="#fff" stroke-width="1"/><rect x="4.500" y="2.500" width="7" height="8" fill="none" stroke="#fff" stroke-width="1"/><path d="M6.500 4.500h3M6.500 6.500h3M6.500 8.500h3" stroke="#fff"/></svg>
<svg class="a" style="left:1715px;top:1022px;" width="16" height="14" viewBox="0 0 16 14"><rect x="1.500" y="0.500" width="13" height="12" fill="none" stroke="#fff" stroke-width="1"/><path d="M2 1h3v6H2z" fill="#fff" opacity=".8"/><path d="M6 1h2v6H6z" fill="#fff"/><path d="M1.500 7.500h8V1" fill="none" stroke="#fff" stroke-width="1"/></svg>
<div class="a" style="left:1747px;top:1027px;width:7px;height:2px;background:#fff;"></div>
<div class="a" style="left:1757px;top:1028px;width:100px;height:1px;background:#e6efe9;"></div>
<div class="a" style="left:1805px;top:1023px;width:4px;height:12px;background:#fff;"></div>
<div class="a" style="left:1861px;top:1027px;width:8px;height:2px;background:#fff;"></div>
<div class="a" style="left:1864px;top:1024px;width:2px;height:8px;background:#fff;"></div>
<span class="t" style="left:1884px;top:1024px;font-size:11px;color:#fff;transform:translateX(0.93px) scaleX(0.9455);">100%</span>
<div class="a" style="left:0px;top:1040px;width:1920px;height:40px;background:linear-gradient(90deg,#1f353f 0%,#213845 35%,#203546 58%,#1f3047 72%,#1d2b47 86%,#1b2746 100%);"></div>
<svg class="a" style="left:15px;top:1051px;" width="18" height="18" viewBox="0 0 18 18"><path d="M0.500 3l7-1v7h-7zM8.500 1.800l8.500-1.300V9H8.500zM0.500 10h7v7l-7-1zM8.500 10H17v7.500l-8.500-1.300z" fill="#fff"/></svg>
<div class="a" style="left:48px;top:1040px;width:344px;height:40px;background:#f2f2f2;border-bottom:1px solid #cfcfcf;box-sizing:border-box;"></div>
<svg class="a" style="left:59px;top:1051px;" width="19" height="19" viewBox="0 0 19 19"><circle cx="11.500" cy="6.800" r="5" fill="none" stroke="#333" stroke-width="1.300"/><path d="M8 10.500L1.500 17" stroke="#333" stroke-width="1.400"/></svg>
<span class="t" style="left:88px;top:1053px;font-size:15px;color:#3a3a3a;transform:translateX(0.94px) scaleX(0.9619);">Type here to search</span>
<svg class="a" style="left:406px;top:1050px;" width="20" height="20" viewBox="0 0 20 20"><circle cx="10" cy="10" r="7" fill="none" stroke="#fff" stroke-width="2"/></svg>
<svg class="a" style="left:454px;top:1051px;" width="19" height="17" viewBox="0 0 19 17"><rect x="3.500" y="4.500" width="9" height="8" fill="none" stroke="#fff" stroke-width="1.400"/><path d="M1.500 1.500h13M1.500 15.500h13" stroke="#fff" stroke-width="1.400"/><path d="M1.500 0.500v2M14.500 0.500v2M1.500 14.500v2M14.500 14.500v2" stroke="#fff" stroke-width="1"/><rect x="15.500" y="5" width="2" height="2.500" fill="#fff"/><path d="M16.500 9.500v6" stroke="#fff" stroke-width="1.400"/></svg>
<svg class="a" style="left:502px;top:1047px;" width="26" height="26" viewBox="0 0 26 26"><defs><linearGradient id="eg1" x1="0" y1="0" x2="0" y2="1"><stop offset="0" stop-color="#2ab0e6"/><stop offset="1" stop-color="#0d56a8"/></linearGradient>
<linearGradient id="eg2" x1="0" y1="0" x2="1" y2="0.300"><stop offset="0" stop-color="#2bb5e9"/><stop offset="0.600" stop-color="#3fc7b0"/><stop offset="1" stop-color="#72d64a"/></linearGradient></defs>
<circle cx="13" cy="13" r="12.300" fill="url(#eg1)"/>
<path d="M0.800 12C2 5 7.500 0.700 13 0.700c7 0 12.300 5 12.300 10.500 0 4-3 6.500-6.500 6.500-3 0-4.300-1.300-4-2.800.3-1.300 1.200-1.800.8-3.600C15 9 12.500 8 10 8.500 5.500 9.300 2 12.500 0.800 16z" fill="url(#eg2)"/>
<path d="M10 12.500c-1.500 4.500 1 10 7.500 11.500-6 2.500-14-1-16.500-8C2.500 12.500 7 10.500 10 12.500z" fill="#124f9c"/>
<path d="M14.800 14.800c-.4 1.400 1 2.900 4 2.900 2.500 0 4.600-1.300 5.600-3.300-1 4.600-4.600 7.600-8.600 7.600-3.500 0-5.500-2.700-5.300-5.700.7-1.700 2.700-2.200 4.300-1.500z" fill="#1e6fc4" opacity=".9"/></svg>
<svg class="a" style="left:552px;top:1050px;" width="24" height="20" viewBox="0 0 24 20"><path d="M1 3.500a1 1 0 0 1 1-1h6l2 2h11a1 1 0 0 1 1 1V8H1z" fill="#e8a828"/>
<path d="M1 6.500h21.500a.5.500 0 0 1 .5.500V18a1 1 0 0 1-1 1H2a1 1 0 0 1-1-1z" fill="#ffd766"/>
<path d="M7 12h10v7h-3v-3.500h-4V19H7z" fill="#4a9de4"/></svg>
<svg class="a" style="left:601px;top:1048px;" width="24" height="24" viewBox="0 0 24 24"><circle cx="12" cy="12" r="11.500" fill="#fff"/>
<path d="M12 0.500A11.500 11.500 0 0 1 21.960 6.250H12A5.750 5.750 0 0 0 6.800 9.500L2.600 5.400A11.500 11.500 0 0 1 12 0.500z" fill="#e33b2e"/>
<path d="M21.960 6.250A11.500 11.500 0 0 1 11 23.450l5.200-8.200A5.750 5.750 0 0 0 16.500 8.500L16.400 6.250z" fill="#fbc116"/>
<path d="M11 23.450A11.500 11.500 0 0 1 2.600 5.400L6.900 14.800A5.750 5.750 0 0 0 14 17.400z" fill="#2da94f"/>
<circle cx="12" cy="12" r="5.400" fill="#fff"/><circle cx="12" cy="12" r="4.300" fill="#4a8af4"/></svg>
<div class="a" style="left:638px;top:1040px;width:45px;height:38px;background:#46606a;"></div>
<div class="a" style="left:683px;top:1040px;width:1px;height:38px;background:#2a3d47;"></div>
<div class="a" style="left:684px;top:1040px;width:2px;height:38px;background:#3b525c;"></div>
<svg class="a" style="left:650px;top:1048px;" width="24" height="24" viewBox="0 0 24 24"><rect x="11" y="3.500" width="11.500" height="17" fill="#fff" stroke="#1e7145" stroke-width="1"/>
<path d="M13.500 6.500h7.500M13.500 9.500h7.500M13.500 12.500h7.500M13.500 15.500h7.500M13.500 18h7.500M17.500 4v16" stroke="#1e7145" stroke-width="1.200" fill="none"/>
<path d="M0.500 3L14 0.800v22.400L0.500 21z" fill="#1e7145"/>
<path d="M4.500 7.500l5.500 9M10 7.500l-5.500 9" stroke="#fff" stroke-width="2.200" fill="none"/></svg>
<svg class="a" style="left:699px;top:1050px;" width="24" height="20" viewBox="0 0 24 20"><rect x="0.500" y="0.500" width="22.500" height="18.500" fill="#000" stroke="#8a8a8a" stroke-width="1"/>
<rect x="1" y="1" width="21.500" height="1.500" fill="#b8b8b8"/>
<text x="2.500" y="9.500" font-family="Liberation Mono,monospace" font-size="6" font-weight="bold" fill="#d8d8d8">C:\_</text></svg>
<div class="a" style="left:544px;top:1078px;width:40px;height:2px;background:#76b9ed;"></div>
<div class="a" style="left:593px;top:1078px;width:31px;height:2px;background:#76b9ed;"></div>
<div class="a" style="left:625px;top:1078px;width:8px;height:2px;background:#76b9ed;"></div>
<div class="a" style="left:638px;top:1078px;width:48px;height:2px;background:#76b9ed;"></div>
<div class="a" style="left:691px;top:1078px;width:40px;height:2px;background:#76b9ed;"></div>
<svg class="a" style="left:1547px;top:1051px;" width="26" height="18" viewBox="0 0 26 18"><rect x="1" y="1" width="21" height="15" rx="1.500" fill="none" stroke="#fff" stroke-width="1.400"/>
<path d="M22 4.500h1.500a1 1 0 0 1 1 1V15a1.500 1.500 0 0 1-1.500 1.500H4" fill="none" stroke="#fff" stroke-width="1.200"/>
<rect x="4.500" y="7" width="6.500" height="5.500" fill="none" stroke="#fff" stroke-width="1.300"/><path d="M4 4.500h15M13.500 7.500h5.500M13.500 10h5.500M13.500 12.500h5.500" stroke="#fff" stroke-width="1.200"/></svg>
<span class="t" style="left:1580px;top:1055px;font-size:13.6px;color:#fff;transform:translateX(0.59px) scaleX(0.9482);">33°C</span>
<span class="t" style="left:1618px;top:1055px;font-size:13.6px;color:#fff;transform:translateX(0.29px) scaleX(0.9945);">Smoke</span>
<svg class="a" style="left:1676px;top:1055px;" width="14" height="9" viewBox="0 0 14 9"><path d="M1.200 7.800L7 1.800l5.800 6" fill="none" stroke="#fff" stroke-width="1.300"/></svg>
<svg class="a" style="left:1701px;top:1051px;" width="14" height="18" viewBox="0 0 14 18"><rect x="1" y="5.500" width="8" height="7" rx="1.500" fill="none" stroke="#fff" stroke-width="1.200"/><path d="M9 8l3.500-2v6L9 10" fill="none" stroke="#fff" stroke-width="1.100"/><path d="M2.500 2.500a6 6 0 0 1 7 0M2.500 15.500a6 6 0 0 0 7 0" fill="none" stroke="#fff" stroke-width="1.100"/></svg>
<svg class="a" style="left:1722px;top:1053px;" width="18" height="15" viewBox="0 0 18 15"><rect x="3.500" y="1" width="13" height="9" fill="none" stroke="#fff" stroke-width="1.200"/><path d="M10 10v3M6 13.500h8" stroke="#fff" stroke-width="1.200"/><rect x="0.600" y="0.600" width="4.500" height="4" fill="#1c2a45" stroke="#fff" stroke-width="1"/><path d="M3 4.500v5" stroke="#fff"/></svg>
<svg class="a" style="left:1746px;top:1052px;" width="18" height="16" viewBox="0 0 18 16"><path d="M1 5.500h3l3.500-3.500v12L4 10.500H1z" fill="none" stroke="#fff" stroke-width="1.200"/><path d="M9.500 5.500a3.500 3.500 0 0 1 0 5M11.500 3.500a6 6 0 0 1 0 9M13.800 1.500a9 9 0 0 1 0 13" fill="none" stroke="#fff" stroke-width="1.100"/></svg>
<span class="t" style="left:1773px;top:1046px;font-size:12px;color:#fff;transform:translateX(0.60px) scaleX(0.8709);">ENG</span>
<span class="t" style="left:1778px;top:1063px;font-size:12px;color:#fff;transform:translateX(0.46px) scaleX(0.8219);">US</span>
<span class="t" style="left:1814px;top:1046px;font-size:12px;color:#fff;transform:translateX(0.39px) scaleX(0.9455);">3:57 PM</span>
<span class="t" style="left:1809px;top:1063px;font-size:12px;color:#fff;transform:translateX(0.36px) scaleX(0.9698);">7/19/2022</span>
<svg class="a" style="left:1878px;top:1051px;" width="26" height="26" viewBox="0 0 26 26"><path d="M1 1h16v11.500H8.500L5 16v-3.500H1z" fill="#fff"/>
<path d="M4 4.500h10M4 7h10M4 9.500h7" stroke="#1c2a45" stroke-width="1"/>
<circle cx="16.500" cy="16.500" r="7.500" fill="#2b2c34" stroke="#6d6f78" stroke-width="1"/></svg>
<span class="t" style="left:1891px;top:1063px;font-size:11px;color:#fff;font-weight:bold;">1</span>
<div class="a" style="left:1915px;top:1040px;width:1px;height:40px;background:#5b6474;"></div>
</body></html>
